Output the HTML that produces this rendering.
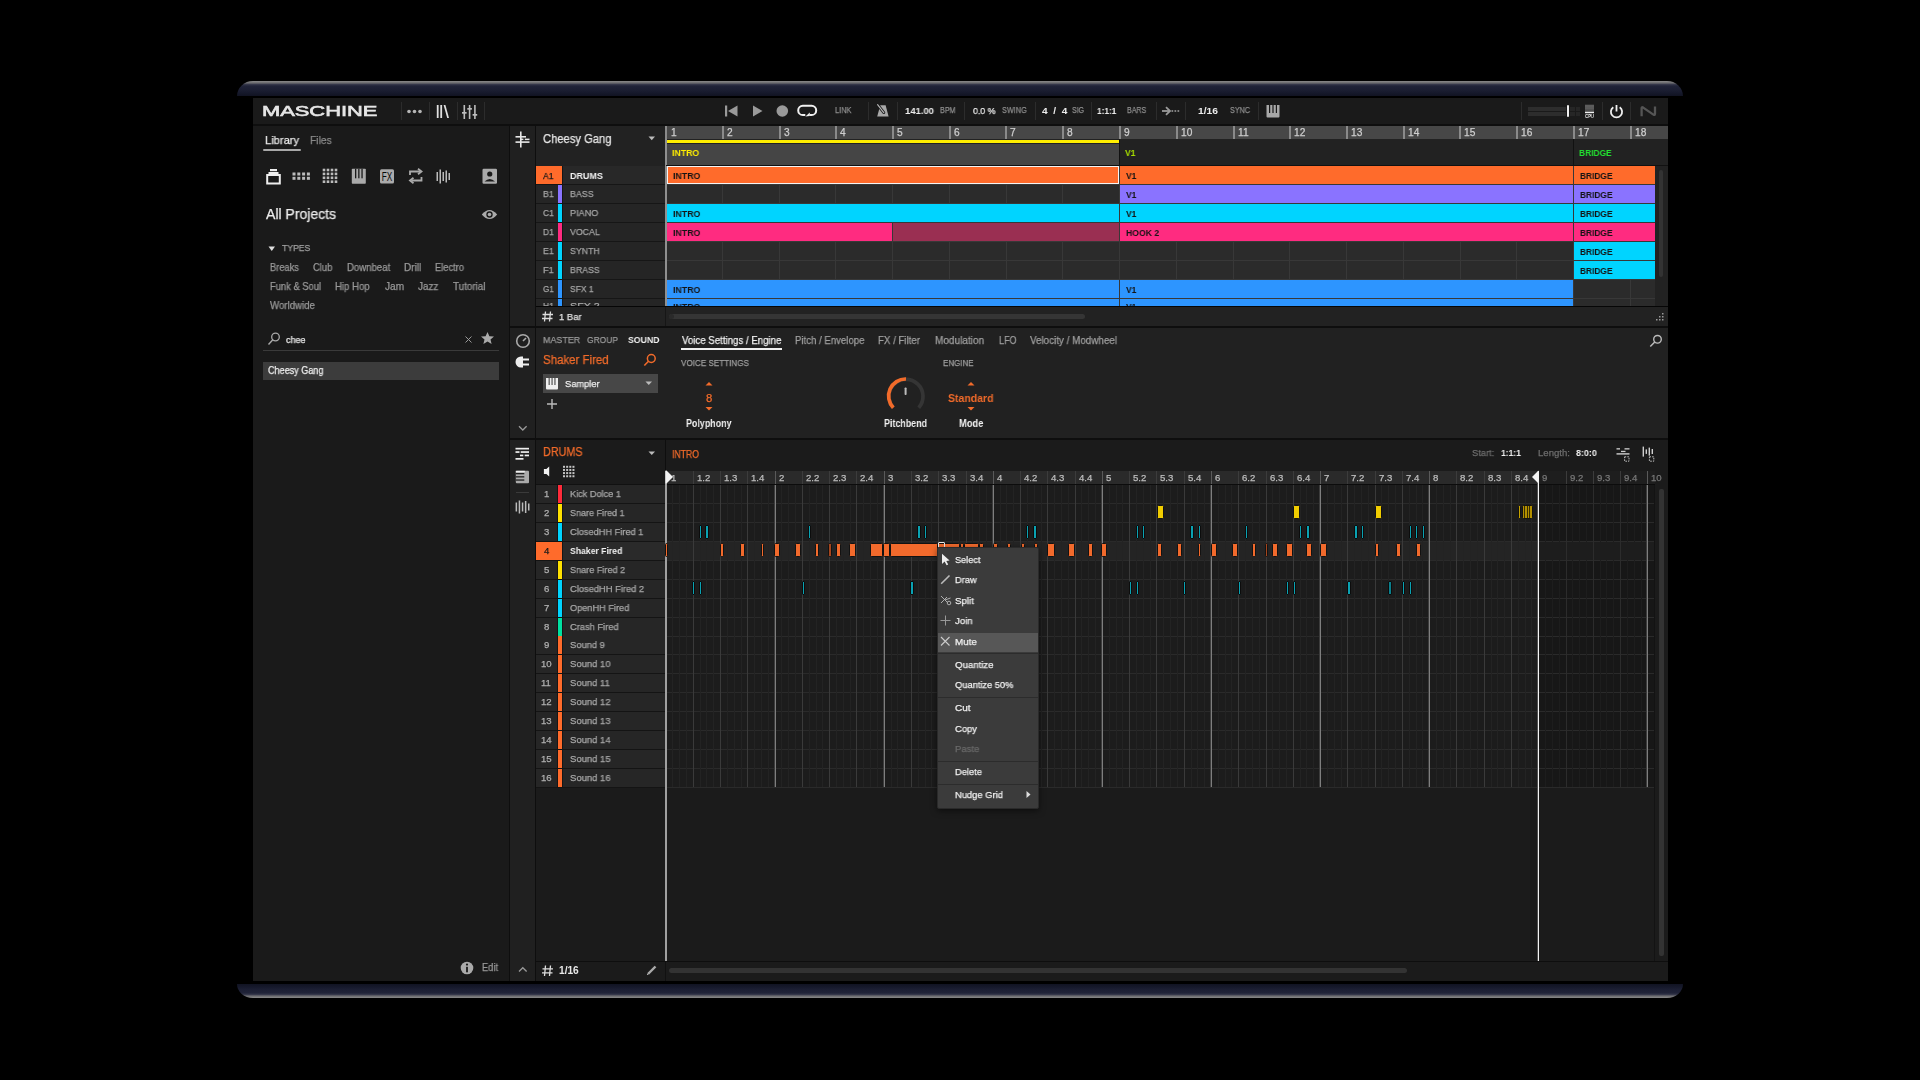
<!DOCTYPE html>
<html><head><meta charset="utf-8"><style>
html,body{margin:0;padding:0;width:1920px;height:1080px;overflow:hidden;background:#000;}
body{position:relative;font-family:"Liberation Sans",sans-serif;}
div,span,svg{position:absolute;}
span{white-space:pre;line-height:1;will-change:transform;}
.m{-webkit-text-stroke:0.25px currentColor;}
</style></head><body>
<div style="left:237px;top:81px;width:1446px;height:15px;background:linear-gradient(to bottom,#8a8a8a 0px,#6a6a6e 2px,#35374a 3.5px,#202338 5px,#1b1e32 9px,#16192b 12px,#111322 15px);border-radius:16px 16px 0 0/15px 15px 0 0;"></div>
<div style="left:237px;top:984px;width:1446px;height:14px;background:linear-gradient(to top,#8a8a8a 0px,#6a6a6e 2px,#35374a 3.5px,#202338 5px,#1b1e32 9px,#16192b 11px,#111322 14px);border-radius:0 0 16px 16px/0 0 14px 14px;"></div>
<div style="left:253px;top:98px;width:1415px;height:883px;background:#0e0e0e;"></div>
<div style="left:253px;top:98px;width:1415px;height:26px;background:#1a1a1a;"></div>
<div style="left:253px;top:126px;width:256px;height:855px;background:#1a1a1a;"></div>
<div style="left:510px;top:126px;width:25px;height:855px;background:#202020;"></div>
<div style="left:536px;top:126px;width:129px;height:200px;background:#222222;"></div>
<div style="left:666px;top:126px;width:1002px;height:200px;background:#222222;"></div>
<div style="left:536px;top:328px;width:1132px;height:110px;background:#212121;"></div>
<div style="left:536px;top:440px;width:129px;height:541px;background:#1b1b1b;"></div>
<div style="left:666px;top:440px;width:1002px;height:541px;background:#1b1b1b;"></div>
<span class="m" style="left:262.00px;top:104.34px;font-size:14.24px;color:#e6e6e6;transform:scaleX(1.5357);transform-origin:0 0;-webkit-text-stroke:0.6px #e6e6e6;">MASCHINE</span>
<div style="left:401px;top:102px;width:1px;height:18px;background:#2c2c2c;"></div>
<div style="left:429px;top:102px;width:1px;height:18px;background:#2c2c2c;"></div>
<div style="left:457px;top:102px;width:1px;height:18px;background:#2c2c2c;"></div>
<div style="left:484px;top:102px;width:1px;height:18px;background:#2c2c2c;"></div>
<div style="left:868px;top:102px;width:1px;height:18px;background:#2c2c2c;"></div>
<div style="left:897px;top:102px;width:1px;height:18px;background:#2c2c2c;"></div>
<div style="left:964px;top:102px;width:1px;height:18px;background:#2c2c2c;"></div>
<div style="left:1035px;top:102px;width:1px;height:18px;background:#2c2c2c;"></div>
<div style="left:1091px;top:102px;width:1px;height:18px;background:#2c2c2c;"></div>
<div style="left:1156px;top:102px;width:1px;height:18px;background:#2c2c2c;"></div>
<div style="left:1185px;top:102px;width:1px;height:18px;background:#2c2c2c;"></div>
<div style="left:1258px;top:102px;width:1px;height:18px;background:#2c2c2c;"></div>
<div style="left:1521px;top:102px;width:1px;height:18px;background:#2c2c2c;"></div>
<div style="left:1602px;top:102px;width:1px;height:18px;background:#2c2c2c;"></div>
<div style="left:1630px;top:102px;width:1px;height:18px;background:#2c2c2c;"></div>
<svg style="left:406px;top:107px;" width="18" height="9" viewBox="0 0 18 9"><circle cx="3.0" cy="4.5" r="1.8" fill="#b5b5b5"/><circle cx="8.5" cy="4.5" r="1.8" fill="#b5b5b5"/><circle cx="14.0" cy="4.5" r="1.8" fill="#b5b5b5"/></svg>
<svg style="left:436px;top:104px;" width="14" height="15" viewBox="0 0 14 15"><rect x="0.8" y="1" width="1.8" height="13" fill="#e0e0e0"/><rect x="4.3" y="1" width="1.8" height="13" fill="#e0e0e0"/><path d="M7.6 1 L9.4 1 L13 14 L11.2 14 Z" fill="#e0e0e0"/></svg>
<svg style="left:462px;top:104px;" width="16" height="16" viewBox="0 0 16 16"><g fill="#bdbdbd"><rect x="1.5" y="1" width="1.6" height="14"/><rect x="6.8" y="1" width="1.6" height="14"/><rect x="12.1" y="1" width="1.6" height="14"/><rect x="0" y="8" width="4.6" height="1.7"/><rect x="5.3" y="4" width="4.6" height="1.7"/><rect x="10.6" y="10" width="4.6" height="1.7"/></g></svg>
<svg style="left:724px;top:104px;" width="15" height="14" viewBox="0 0 15 14"><rect x="1" y="1.5" width="2.2" height="11" fill="#9a9a9a"/><path d="M13.5 1.5 L13.5 12.5 L4 7 Z" fill="#9a9a9a"/></svg>
<svg style="left:752px;top:104px;" width="12" height="14" viewBox="0 0 12 14"><path d="M1 1.5 L1 12.5 L10.5 7 Z" fill="#9a9a9a"/></svg>
<svg style="left:775px;top:104px;" width="15" height="14" viewBox="0 0 15 14"><circle cx="7.3" cy="7" r="5.8" fill="#9a9a9a"/></svg>
<svg style="left:797px;top:104px;" width="22" height="14" viewBox="0 0 22 14"><path d="M8.3 11 L5.8 11 A4.6 4.6 0 0 1 5.8 1.8 L14.6 1.8 A4.6 4.6 0 0 1 14.6 11 L12.6 11" fill="none" stroke="#f0f0f0" stroke-width="2"/><path d="M8.4 12.5 L12.8 8.6 L12.8 12.1 Z" fill="#f0f0f0"/></svg>
<span class="m" style="left:834.50px;top:106.29px;font-size:8.87px;color:#8e8e8e;transform:scaleX(0.8364);transform-origin:0 0;">LINK</span>
<svg style="left:876px;top:104px;" width="14" height="14" viewBox="0 0 14 14"><path d="M4.3 1.2 L9.6 1.2 L12.6 12.6 L1.2 12.6 Z" fill="#a8a8a8"/><path d="M1.6 0.6 L7.8 8.6" stroke="#1a1a1a" stroke-width="2.8" stroke-linecap="round"/><path d="M1.6 0.6 L7.8 8.6" stroke="#b8b8b8" stroke-width="1.1" stroke-linecap="round"/></svg>
<span style="left:905.00px;top:106.26px;font-size:9.74px;color:#ececec;font-weight:bold;transform:scaleX(0.9732);transform-origin:0 0;">141.00</span>
<span class="m" style="left:939.50px;top:106.29px;font-size:8.87px;color:#8e8e8e;transform:scaleX(0.8075);transform-origin:0 0;">BPM</span>
<span class="m" style="left:972.50px;top:106.26px;font-size:9.74px;color:#ececec;transform:scaleX(0.9043);transform-origin:0 0;">0.0 %</span>
<span class="m" style="left:1001.50px;top:106.29px;font-size:8.87px;color:#8e8e8e;transform:scaleX(0.8218);transform-origin:0 0;">SWING</span>
<span style="left:1042.00px;top:106.26px;font-size:9.74px;color:#ececec;font-weight:bold;transform:scaleX(1.0392);transform-origin:0 0;">4  /  4</span>
<span class="m" style="left:1072.00px;top:106.29px;font-size:8.87px;color:#8e8e8e;transform:scaleX(0.7911);transform-origin:0 0;">SIG</span>
<span style="left:1097.00px;top:106.26px;font-size:9.74px;color:#ececec;font-weight:bold;transform:scaleX(0.8488);transform-origin:0 0;">1:1:1</span>
<span class="m" style="left:1127.00px;top:106.29px;font-size:8.87px;color:#8e8e8e;transform:scaleX(0.7988);transform-origin:0 0;">BARS</span>
<svg style="left:1161px;top:105px;" width="20" height="12" viewBox="0 0 20 12"><path d="M1 6 L8 6" stroke="#9a9a9a" stroke-width="1.8"/><path d="M5 2.2 L9 6 L5 9.8" fill="none" stroke="#9a9a9a" stroke-width="1.8"/><rect x="10.5" y="5.2" width="1.7" height="1.6" fill="#9a9a9a"/><rect x="13.5" y="5.2" width="1.7" height="1.6" fill="#9a9a9a"/><rect x="16.5" y="5.2" width="1.7" height="1.6" fill="#9a9a9a"/></svg>
<span style="left:1198.00px;top:106.26px;font-size:9.74px;color:#ececec;font-weight:bold;transform:scaleX(1.0559);transform-origin:0 0;">1/16</span>
<span class="m" style="left:1230.00px;top:106.29px;font-size:8.87px;color:#8e8e8e;transform:scaleX(0.8114);transform-origin:0 0;">SYNC</span>
<svg style="left:1265px;top:104px;" width="16" height="15" viewBox="0 0 16 15"><path d="M1.5 1 L14.5 1 L14.5 12.5 Q14.5 13.5 13.5 13.5 L2.5 13.5 Q1.5 13.5 1.5 12.5 Z" fill="#a8a8a8"/><g fill="#1a1a1a"><rect x="4" y="1" width="1.2" height="8"/><rect x="7.4" y="1" width="1.2" height="8"/><rect x="10.8" y="1" width="1.2" height="8"/></g></svg>
<div style="left:1528px;top:107px;width:38px;height:4px;background:#2d2d2d;"></div>
<div style="left:1528px;top:112px;width:38px;height:4px;background:#2d2d2d;"></div>
<div style="left:1570px;top:107px;width:5px;height:4px;background:#262626;"></div>
<div style="left:1576px;top:107px;width:4px;height:4px;background:#262626;"></div>
<div style="left:1570px;top:112px;width:5px;height:4px;background:#262626;"></div>
<div style="left:1576px;top:112px;width:4px;height:4px;background:#262626;"></div>
<div style="left:1567px;top:105px;width:2px;height:12px;background:#f0f0f0;border-radius:1px;"></div>
<svg style="left:1584px;top:103px;" width="11" height="12" viewBox="0 0 11 12"><defs><linearGradient id="cpug" x1="0" y1="0" x2="0" y2="1"><stop offset="0" stop-color="#5a5a5a"/><stop offset="1" stop-color="#4a4a4a"/></linearGradient></defs><rect x="1" y="1.7" width="9" height="7.5" fill="url(#cpug)"/><rect x="1" y="2.7" width="9" height="0.7" fill="#666"/><rect x="1" y="4.7" width="9" height="0.7" fill="#666"/><rect x="1" y="8.8" width="9" height="1.4" fill="#f0f0f0"/></svg>
<span style="left:1585.20px;top:114.38px;font-size:5.81px;color:#f0f0f0;font-weight:bold;transform:scaleX(0.7173);transform-origin:0 0;">CPU</span>
<svg style="left:1608px;top:103px;" width="17" height="17" viewBox="0 0 17 17"><path d="M5.3 4.2 A5.6 5.6 0 1 0 11.7 4.2" fill="none" stroke="#f0f0f0" stroke-width="1.8"/><path d="M8.5 2 L8.5 8.5" stroke="#f0f0f0" stroke-width="1.8"/></svg>
<svg style="left:1639px;top:104px;" width="20" height="14" viewBox="0 0 20 14"><path d="M2.6 12.2 L2.6 4.2 Q2.6 2.6 4.2 3.6 L14.4 10.6 Q16 11.6 16 9.8 L16 2.4" fill="none" stroke="#555" stroke-width="2.3" stroke-linejoin="round"/></svg>
<span class="m" style="left:264.50px;top:134.36px;font-size:11.63px;color:#e8e8e8;transform:scaleX(0.9571);transform-origin:0 0;">Library</span>
<div style="left:263px;top:149px;width:38px;height:2px;background:#a8a8a8;border-radius:1px;"></div>
<span class="m" style="left:309.50px;top:134.36px;font-size:11.63px;color:#8a8a8a;transform:scaleX(0.8845);transform-origin:0 0;">Files</span>
<svg style="left:266px;top:168px;" width="15" height="17" viewBox="0 0 15 17"><rect x="4" y="1" width="7" height="2.2" fill="#eee"/><rect x="2.5" y="4" width="10" height="2" fill="#eee"/><rect x="1.2" y="7" width="12.6" height="8.5" fill="none" stroke="#eee" stroke-width="2"/></svg>
<svg style="left:292px;top:172px;" width="20" height="9" viewBox="0 0 20 9"><rect x="0.5" y="0.5" width="3" height="3" fill="#bbb"/><rect x="0.5" y="4.8" width="3" height="3" fill="#bbb"/><rect x="5.3" y="0.5" width="3" height="3" fill="#bbb"/><rect x="5.3" y="4.8" width="3" height="3" fill="#bbb"/><rect x="10.1" y="0.5" width="3" height="3" fill="#bbb"/><rect x="10.1" y="4.8" width="3" height="3" fill="#bbb"/><rect x="14.899999999999999" y="0.5" width="3" height="3" fill="#bbb"/><rect x="14.899999999999999" y="4.8" width="3" height="3" fill="#bbb"/></svg>
<svg style="left:322px;top:168px;" width="17" height="16" viewBox="0 0 17 16"><rect x="0.7" y="0.7" width="2.6" height="2.6" fill="#bbb"/><rect x="0.7" y="4.6" width="2.6" height="2.6" fill="#bbb"/><rect x="0.7" y="8.5" width="2.6" height="2.6" fill="#bbb"/><rect x="0.7" y="12.399999999999999" width="2.6" height="2.6" fill="#bbb"/><rect x="4.7" y="0.7" width="2.6" height="2.6" fill="#bbb"/><rect x="4.7" y="4.6" width="2.6" height="2.6" fill="#bbb"/><rect x="4.7" y="8.5" width="2.6" height="2.6" fill="#bbb"/><rect x="4.7" y="12.399999999999999" width="2.6" height="2.6" fill="#bbb"/><rect x="8.7" y="0.7" width="2.6" height="2.6" fill="#bbb"/><rect x="8.7" y="4.6" width="2.6" height="2.6" fill="#bbb"/><rect x="8.7" y="8.5" width="2.6" height="2.6" fill="#bbb"/><rect x="8.7" y="12.399999999999999" width="2.6" height="2.6" fill="#bbb"/><rect x="12.7" y="0.7" width="2.6" height="2.6" fill="#bbb"/><rect x="12.7" y="4.6" width="2.6" height="2.6" fill="#bbb"/><rect x="12.7" y="8.5" width="2.6" height="2.6" fill="#bbb"/><rect x="12.7" y="12.399999999999999" width="2.6" height="2.6" fill="#bbb"/></svg>
<svg style="left:351px;top:168px;" width="16" height="17" viewBox="0 0 16 17"><path d="M0.8 1.5 Q0.8 0.8 1.5 0.8 L14 0.8 Q14.8 0.8 14.8 1.5 L14.8 15 Q14.8 15.8 14 15.8 L1.5 15.8 Q0.8 15.8 0.8 15 Z" fill="#aaa"/><g fill="#1a1a1a"><rect x="4" y="0.8" width="1.3" height="9.5"/><rect x="7.2" y="0.8" width="1.3" height="9.5"/><rect x="10.4" y="0.8" width="1.3" height="9.5"/></g></svg>
<svg style="left:379px;top:168px;" width="17" height="17" viewBox="0 0 17 17"><rect x="1" y="1.2" width="14" height="14.2" rx="1.5" fill="#ababab"/><text x="8" y="13.2" font-size="12" font-family="Liberation Sans" text-anchor="middle" fill="#0a0a0a" textLength="10.5" lengthAdjust="spacingAndGlyphs">FX</text></svg>
<svg style="left:408px;top:168px;" width="16" height="17" viewBox="0 0 16 17"><path d="M2 7 L2 3.5 L12 3.5" fill="none" stroke="#aaa" stroke-width="1.8"/><path d="M10 0.8 L13.5 3.5 L10 6.2" fill="none" stroke="#aaa" stroke-width="1.8"/><path d="M13.5 9 L13.5 12.5 L3.5 12.5" fill="none" stroke="#aaa" stroke-width="1.8"/><path d="M5.5 9.8 L2 12.5 L5.5 15.2" fill="none" stroke="#aaa" stroke-width="1.8"/></svg>
<svg style="left:436px;top:169px;" width="16" height="15" viewBox="0 0 16 15"><g fill="#bbb"><rect x="0.5" y="3" width="1.5" height="9"/><rect x="3.5" y="0.5" width="1.5" height="14"/><rect x="6.5" y="3" width="1.5" height="9"/><rect x="9.5" y="1.5" width="1.5" height="12"/><rect x="12.5" y="4" width="1.5" height="7"/></g></svg>
<svg style="left:482px;top:168px;" width="16" height="17" viewBox="0 0 16 17"><rect x="0.5" y="0.8" width="14.5" height="15" rx="1.2" fill="#aaa"/><circle cx="7.75" cy="6" r="2.6" fill="#1a1a1a"/><path d="M2.5 13.5 Q7.75 8.5 13 13.5 Z" fill="#1a1a1a"/></svg>
<span class="m" style="left:265.90px;top:207.17px;font-size:14.10px;color:#ececec;transform:scaleX(0.9930);transform-origin:0 0;">All Projects</span>
<svg style="left:481px;top:208px;" width="18" height="13" viewBox="0 0 18 13"><path d="M0.8 6.5 Q8.5 -2.5 16.2 6.5 Q8.5 15.5 0.8 6.5 Z" fill="#aaa"/><circle cx="8.5" cy="6.5" r="3.2" fill="#1a1a1a"/><circle cx="8.5" cy="6.5" r="1.8" fill="#aaa"/></svg>
<svg style="left:268px;top:246px;" width="8" height="6" viewBox="0 0 8 6"><path d="M0.5 0.5 L7 0.5 L3.75 5 Z" fill="#ddd"/></svg>
<span class="m" style="left:281.70px;top:244.13px;font-size:9.30px;color:#a0a0a0;transform:scaleX(0.9275);transform-origin:0 0;">TYPES</span>
<span class="m" style="left:270.00px;top:263.39px;font-size:10.17px;color:#999999;transform:scaleX(0.9133);transform-origin:0 0;">Breaks</span>
<span class="m" style="left:312.80px;top:263.39px;font-size:10.17px;color:#999999;transform:scaleX(0.9279);transform-origin:0 0;">Club</span>
<span class="m" style="left:347.00px;top:263.39px;font-size:10.17px;color:#999999;transform:scaleX(0.9447);transform-origin:0 0;">Downbeat</span>
<span class="m" style="left:403.80px;top:263.39px;font-size:10.17px;color:#999999;transform:scaleX(0.9829);transform-origin:0 0;">Drill</span>
<span class="m" style="left:435.00px;top:263.39px;font-size:10.17px;color:#999999;transform:scaleX(0.9165);transform-origin:0 0;">Electro</span>
<span class="m" style="left:270.00px;top:281.99px;font-size:10.17px;color:#999999;transform:scaleX(0.9224);transform-origin:0 0;">Funk &amp; Soul</span>
<span class="m" style="left:335.20px;top:281.99px;font-size:10.17px;color:#999999;transform:scaleX(0.9462);transform-origin:0 0;">Hip Hop</span>
<span class="m" style="left:384.70px;top:281.99px;font-size:10.17px;color:#999999;transform:scaleX(0.9933);transform-origin:0 0;">Jam</span>
<span class="m" style="left:417.80px;top:281.99px;font-size:10.17px;color:#999999;transform:scaleX(0.9757);transform-origin:0 0;">Jazz</span>
<span class="m" style="left:452.90px;top:281.99px;font-size:10.17px;color:#999999;transform:scaleX(0.9709);transform-origin:0 0;">Tutorial</span>
<span class="m" style="left:270.00px;top:300.79px;font-size:10.17px;color:#999999;transform:scaleX(0.9512);transform-origin:0 0;">Worldwide</span>
<svg style="left:267px;top:332px;" width="14" height="14" viewBox="0 0 14 14"><circle cx="8.5" cy="5" r="3.8" fill="none" stroke="#aaa" stroke-width="1.3"/><path d="M5.8 7.8 L1.5 12.5" stroke="#aaa" stroke-width="1.4"/></svg>
<span class="m" style="left:285.50px;top:335.20px;font-size:9.45px;color:#e8e8e8;transform:scaleX(0.9512);transform-origin:0 0;">chee</span>
<svg style="left:464px;top:335px;" width="9" height="9" viewBox="0 0 9 9"><path d="M1.5 1.5 L7.5 7.5 M7.5 1.5 L1.5 7.5" stroke="#999" stroke-width="1"/></svg>
<svg style="left:480px;top:331px;" width="15" height="14" viewBox="0 0 15 14"><path d="M7.5 1 L9.4 5.3 L14 5.6 L10.5 8.6 L11.6 13 L7.5 10.6 L3.4 13 L4.5 8.6 L1 5.6 L5.6 5.3 Z" fill="#aaa"/></svg>
<div style="left:263px;top:350px;width:236px;height:1px;background:#3a3a3a;"></div>
<div style="left:263px;top:362px;width:236px;height:18px;background:#3c3c3c;"></div>
<span class="m" style="left:268.20px;top:365.69px;font-size:10.17px;color:#eeeeee;transform:scaleX(0.8920);transform-origin:0 0;">Cheesy Gang</span>
<svg style="left:460px;top:961px;" width="14" height="14" viewBox="0 0 14 14"><circle cx="7" cy="7" r="6.3" fill="#aaa"/><rect x="6.1" y="5.8" width="1.8" height="5.5" fill="#1a1a1a"/><circle cx="7" cy="3.6" r="1.1" fill="#1a1a1a"/></svg>
<span class="m" style="left:482.30px;top:962.89px;font-size:10.17px;color:#999999;transform:scaleX(0.9116);transform-origin:0 0;">Edit</span>
<svg style="left:515px;top:131px;" width="15" height="17" viewBox="0 0 15 17"><g fill="#e8e8e8"><rect x="5" y="0.5" width="1.6" height="16"/><rect x="0.5" y="5" width="10.5" height="1.6"/><rect x="0.5" y="10.3" width="14" height="1.6"/><rect x="6" y="7.6" width="2.4" height="1.5"/><rect x="9.8" y="7.6" width="4.7" height="1.5"/></g></svg>
<span class="m" style="left:542.80px;top:132.73px;font-size:12.72px;color:#e6e6e6;transform:scaleX(0.8808);transform-origin:0 0;">Cheesy Gang</span>
<svg style="left:648px;top:136px;" width="8" height="5" viewBox="0 0 8 5"><path d="M0.5 0.5 L7 0.5 L3.75 4.2 Z" fill="#bbb"/></svg>
<div style="left:666px;top:126px;width:1002px;height:13px;background:#474747;"></div>
<div style="left:665px;top:126px;width:2px;height:13px;background:#8a8a8a;"></div>
<span class="m" style="left:671.00px;top:128.19px;font-size:10.17px;color:#cfcfcf;">1</span>
<div style="left:722px;top:126px;width:2px;height:13px;background:#8a8a8a;"></div>
<span class="m" style="left:726.80px;top:128.19px;font-size:10.17px;color:#cfcfcf;">2</span>
<div style="left:779px;top:126px;width:2px;height:13px;background:#8a8a8a;"></div>
<span class="m" style="left:783.80px;top:128.19px;font-size:10.17px;color:#cfcfcf;">3</span>
<div style="left:835px;top:126px;width:2px;height:13px;background:#8a8a8a;"></div>
<span class="m" style="left:839.80px;top:128.19px;font-size:10.17px;color:#cfcfcf;">4</span>
<div style="left:892px;top:126px;width:2px;height:13px;background:#8a8a8a;"></div>
<span class="m" style="left:896.80px;top:128.19px;font-size:10.17px;color:#cfcfcf;">5</span>
<div style="left:949px;top:126px;width:2px;height:13px;background:#8a8a8a;"></div>
<span class="m" style="left:953.80px;top:128.19px;font-size:10.17px;color:#cfcfcf;">6</span>
<div style="left:1005px;top:126px;width:2px;height:13px;background:#8a8a8a;"></div>
<span class="m" style="left:1009.80px;top:128.19px;font-size:10.17px;color:#cfcfcf;">7</span>
<div style="left:1062px;top:126px;width:2px;height:13px;background:#8a8a8a;"></div>
<span class="m" style="left:1066.80px;top:128.19px;font-size:10.17px;color:#cfcfcf;">8</span>
<div style="left:1119px;top:126px;width:2px;height:13px;background:#8a8a8a;"></div>
<span class="m" style="left:1123.80px;top:128.19px;font-size:10.17px;color:#cfcfcf;">9</span>
<div style="left:1176px;top:126px;width:2px;height:13px;background:#8a8a8a;"></div>
<span class="m" style="left:1180.80px;top:128.19px;font-size:10.17px;color:#cfcfcf;">10</span>
<div style="left:1233px;top:126px;width:2px;height:13px;background:#8a8a8a;"></div>
<span class="m" style="left:1237.80px;top:128.19px;font-size:10.17px;color:#cfcfcf;">11</span>
<div style="left:1289px;top:126px;width:2px;height:13px;background:#8a8a8a;"></div>
<span class="m" style="left:1293.80px;top:128.19px;font-size:10.17px;color:#cfcfcf;">12</span>
<div style="left:1346px;top:126px;width:2px;height:13px;background:#8a8a8a;"></div>
<span class="m" style="left:1350.80px;top:128.19px;font-size:10.17px;color:#cfcfcf;">13</span>
<div style="left:1403px;top:126px;width:2px;height:13px;background:#8a8a8a;"></div>
<span class="m" style="left:1407.80px;top:128.19px;font-size:10.17px;color:#cfcfcf;">14</span>
<div style="left:1459px;top:126px;width:2px;height:13px;background:#8a8a8a;"></div>
<span class="m" style="left:1463.80px;top:128.19px;font-size:10.17px;color:#cfcfcf;">15</span>
<div style="left:1516px;top:126px;width:2px;height:13px;background:#8a8a8a;"></div>
<span class="m" style="left:1520.80px;top:128.19px;font-size:10.17px;color:#cfcfcf;">16</span>
<div style="left:1573px;top:126px;width:2px;height:13px;background:#8a8a8a;"></div>
<span class="m" style="left:1577.80px;top:128.19px;font-size:10.17px;color:#cfcfcf;">17</span>
<div style="left:1630px;top:126px;width:2px;height:13px;background:#8a8a8a;"></div>
<span class="m" style="left:1634.80px;top:128.19px;font-size:10.17px;color:#cfcfcf;">18</span>
<div style="left:665px;top:139px;width:2px;height:167px;background:#8f8f8f;"></div>
<div style="left:667px;top:139px;width:1001px;height:27px;background:#222222;"></div>
<div style="left:667px;top:140px;width:453px;height:3px;background:#ffee00;"></div>
<div style="left:667px;top:144px;width:453px;height:21px;background:#454545;"></div>
<div style="left:1119px;top:139px;width:1px;height:27px;background:#111;"></div>
<div style="left:1573px;top:139px;width:1px;height:27px;background:#111;"></div>
<span style="left:671.50px;top:147.63px;font-size:9.88px;color:#ffee00;font-weight:bold;transform:scaleX(0.8849);transform-origin:0 0;">INTRO</span>
<span style="left:1124.70px;top:147.63px;font-size:9.88px;color:#a8e000;font-weight:bold;transform:scaleX(0.8672);transform-origin:0 0;">V1</span>
<span style="left:1579.00px;top:147.63px;font-size:9.88px;color:#22e030;font-weight:bold;transform:scaleX(0.8505);transform-origin:0 0;">BRIDGE</span>
<div style="left:666px;top:165px;width:1002px;height:1px;background:#111;"></div>
<div style="left:536px;top:166px;width:129px;height:18px;background:#282828;"></div>
<div style="left:536px;top:184px;width:129px;height:1px;background:#161616;"></div>
<div style="left:536px;top:166px;width:26px;height:18px;background:#ff6b2b;"></div>
<span class="m" style="left:542.80px;top:170.58px;font-size:9.59px;color:#1a1a1a;transform:scaleX(0.8935);transform-origin:0 0;">A1</span>
<span style="left:569.75px;top:170.58px;font-size:9.59px;color:#f2f2f2;font-weight:bold;transform:scaleX(0.9358);transform-origin:0 0;">DRUMS</span>
<div style="left:562px;top:166px;width:1px;height:18px;background:#151515;"></div>
<div style="left:667px;top:166px;width:988px;height:18px;background:#2b2b2b;"></div>
<div style="left:667px;top:184px;width:988px;height:1px;background:#383838;"></div>
<div style="left:722px;top:166px;width:1px;height:18px;background:#383838;"></div>
<div style="left:779px;top:166px;width:1px;height:18px;background:#383838;"></div>
<div style="left:835px;top:166px;width:1px;height:18px;background:#383838;"></div>
<div style="left:892px;top:166px;width:1px;height:18px;background:#383838;"></div>
<div style="left:949px;top:166px;width:1px;height:18px;background:#383838;"></div>
<div style="left:1006px;top:166px;width:1px;height:18px;background:#383838;"></div>
<div style="left:1062px;top:166px;width:1px;height:18px;background:#383838;"></div>
<div style="left:1119px;top:166px;width:1px;height:18px;background:#383838;"></div>
<div style="left:1176px;top:166px;width:1px;height:18px;background:#383838;"></div>
<div style="left:1233px;top:166px;width:1px;height:18px;background:#383838;"></div>
<div style="left:1289px;top:166px;width:1px;height:18px;background:#383838;"></div>
<div style="left:1346px;top:166px;width:1px;height:18px;background:#383838;"></div>
<div style="left:1403px;top:166px;width:1px;height:18px;background:#383838;"></div>
<div style="left:1460px;top:166px;width:1px;height:18px;background:#383838;"></div>
<div style="left:1516px;top:166px;width:1px;height:18px;background:#383838;"></div>
<div style="left:1573px;top:166px;width:1px;height:18px;background:#383838;"></div>
<div style="left:1630px;top:166px;width:1px;height:18px;background:#383838;"></div>
<div style="left:536px;top:185px;width:129px;height:18px;background:#252525;"></div>
<div style="left:536px;top:203px;width:129px;height:1px;background:#161616;"></div>
<div style="left:558px;top:185px;width:4px;height:18px;background:#8a73ff;"></div>
<span class="m" style="left:542.60px;top:188.88px;font-size:9.59px;color:#a5a5a5;transform:scaleX(0.9190);transform-origin:0 0;">B1</span>
<span class="m" style="left:569.75px;top:188.88px;font-size:9.59px;color:#a5a5a5;transform:scaleX(0.9253);transform-origin:0 0;">BASS</span>
<div style="left:562px;top:185px;width:1px;height:18px;background:#151515;"></div>
<div style="left:667px;top:185px;width:988px;height:18px;background:#2b2b2b;"></div>
<div style="left:667px;top:203px;width:988px;height:1px;background:#383838;"></div>
<div style="left:722px;top:185px;width:1px;height:18px;background:#383838;"></div>
<div style="left:779px;top:185px;width:1px;height:18px;background:#383838;"></div>
<div style="left:835px;top:185px;width:1px;height:18px;background:#383838;"></div>
<div style="left:892px;top:185px;width:1px;height:18px;background:#383838;"></div>
<div style="left:949px;top:185px;width:1px;height:18px;background:#383838;"></div>
<div style="left:1006px;top:185px;width:1px;height:18px;background:#383838;"></div>
<div style="left:1062px;top:185px;width:1px;height:18px;background:#383838;"></div>
<div style="left:1119px;top:185px;width:1px;height:18px;background:#383838;"></div>
<div style="left:1176px;top:185px;width:1px;height:18px;background:#383838;"></div>
<div style="left:1233px;top:185px;width:1px;height:18px;background:#383838;"></div>
<div style="left:1289px;top:185px;width:1px;height:18px;background:#383838;"></div>
<div style="left:1346px;top:185px;width:1px;height:18px;background:#383838;"></div>
<div style="left:1403px;top:185px;width:1px;height:18px;background:#383838;"></div>
<div style="left:1460px;top:185px;width:1px;height:18px;background:#383838;"></div>
<div style="left:1516px;top:185px;width:1px;height:18px;background:#383838;"></div>
<div style="left:1573px;top:185px;width:1px;height:18px;background:#383838;"></div>
<div style="left:1630px;top:185px;width:1px;height:18px;background:#383838;"></div>
<div style="left:536px;top:204px;width:129px;height:18px;background:#252525;"></div>
<div style="left:536px;top:222px;width:129px;height:1px;background:#161616;"></div>
<div style="left:558px;top:204px;width:4px;height:18px;background:#00d4ff;"></div>
<span class="m" style="left:542.60px;top:207.88px;font-size:9.59px;color:#a5a5a5;transform:scaleX(0.8795);transform-origin:0 0;">C1</span>
<span class="m" style="left:569.75px;top:207.88px;font-size:9.59px;color:#a5a5a5;transform:scaleX(0.9519);transform-origin:0 0;">PIANO</span>
<div style="left:562px;top:204px;width:1px;height:18px;background:#151515;"></div>
<div style="left:667px;top:204px;width:988px;height:18px;background:#2b2b2b;"></div>
<div style="left:667px;top:222px;width:988px;height:1px;background:#383838;"></div>
<div style="left:722px;top:204px;width:1px;height:18px;background:#383838;"></div>
<div style="left:779px;top:204px;width:1px;height:18px;background:#383838;"></div>
<div style="left:835px;top:204px;width:1px;height:18px;background:#383838;"></div>
<div style="left:892px;top:204px;width:1px;height:18px;background:#383838;"></div>
<div style="left:949px;top:204px;width:1px;height:18px;background:#383838;"></div>
<div style="left:1006px;top:204px;width:1px;height:18px;background:#383838;"></div>
<div style="left:1062px;top:204px;width:1px;height:18px;background:#383838;"></div>
<div style="left:1119px;top:204px;width:1px;height:18px;background:#383838;"></div>
<div style="left:1176px;top:204px;width:1px;height:18px;background:#383838;"></div>
<div style="left:1233px;top:204px;width:1px;height:18px;background:#383838;"></div>
<div style="left:1289px;top:204px;width:1px;height:18px;background:#383838;"></div>
<div style="left:1346px;top:204px;width:1px;height:18px;background:#383838;"></div>
<div style="left:1403px;top:204px;width:1px;height:18px;background:#383838;"></div>
<div style="left:1460px;top:204px;width:1px;height:18px;background:#383838;"></div>
<div style="left:1516px;top:204px;width:1px;height:18px;background:#383838;"></div>
<div style="left:1573px;top:204px;width:1px;height:18px;background:#383838;"></div>
<div style="left:1630px;top:204px;width:1px;height:18px;background:#383838;"></div>
<div style="left:536px;top:223px;width:129px;height:18px;background:#252525;"></div>
<div style="left:536px;top:241px;width:129px;height:1px;background:#161616;"></div>
<div style="left:558px;top:223px;width:4px;height:18px;background:#ff2b80;"></div>
<span class="m" style="left:542.60px;top:226.88px;font-size:9.59px;color:#a5a5a5;transform:scaleX(0.8795);transform-origin:0 0;">D1</span>
<span class="m" style="left:569.75px;top:226.88px;font-size:9.59px;color:#a5a5a5;transform:scaleX(0.9163);transform-origin:0 0;">VOCAL</span>
<div style="left:562px;top:223px;width:1px;height:18px;background:#151515;"></div>
<div style="left:667px;top:223px;width:988px;height:18px;background:#2b2b2b;"></div>
<div style="left:667px;top:241px;width:988px;height:1px;background:#383838;"></div>
<div style="left:722px;top:223px;width:1px;height:18px;background:#383838;"></div>
<div style="left:779px;top:223px;width:1px;height:18px;background:#383838;"></div>
<div style="left:835px;top:223px;width:1px;height:18px;background:#383838;"></div>
<div style="left:892px;top:223px;width:1px;height:18px;background:#383838;"></div>
<div style="left:949px;top:223px;width:1px;height:18px;background:#383838;"></div>
<div style="left:1006px;top:223px;width:1px;height:18px;background:#383838;"></div>
<div style="left:1062px;top:223px;width:1px;height:18px;background:#383838;"></div>
<div style="left:1119px;top:223px;width:1px;height:18px;background:#383838;"></div>
<div style="left:1176px;top:223px;width:1px;height:18px;background:#383838;"></div>
<div style="left:1233px;top:223px;width:1px;height:18px;background:#383838;"></div>
<div style="left:1289px;top:223px;width:1px;height:18px;background:#383838;"></div>
<div style="left:1346px;top:223px;width:1px;height:18px;background:#383838;"></div>
<div style="left:1403px;top:223px;width:1px;height:18px;background:#383838;"></div>
<div style="left:1460px;top:223px;width:1px;height:18px;background:#383838;"></div>
<div style="left:1516px;top:223px;width:1px;height:18px;background:#383838;"></div>
<div style="left:1573px;top:223px;width:1px;height:18px;background:#383838;"></div>
<div style="left:1630px;top:223px;width:1px;height:18px;background:#383838;"></div>
<div style="left:536px;top:242px;width:129px;height:18px;background:#252525;"></div>
<div style="left:536px;top:260px;width:129px;height:1px;background:#161616;"></div>
<div style="left:558px;top:242px;width:4px;height:18px;background:#00d4ff;"></div>
<span class="m" style="left:542.60px;top:245.88px;font-size:9.59px;color:#a5a5a5;transform:scaleX(0.9190);transform-origin:0 0;">E1</span>
<span class="m" style="left:569.75px;top:245.88px;font-size:9.59px;color:#a5a5a5;transform:scaleX(0.9163);transform-origin:0 0;">SYNTH</span>
<div style="left:562px;top:242px;width:1px;height:18px;background:#151515;"></div>
<div style="left:667px;top:242px;width:988px;height:18px;background:#2b2b2b;"></div>
<div style="left:667px;top:260px;width:988px;height:1px;background:#383838;"></div>
<div style="left:722px;top:242px;width:1px;height:18px;background:#383838;"></div>
<div style="left:779px;top:242px;width:1px;height:18px;background:#383838;"></div>
<div style="left:835px;top:242px;width:1px;height:18px;background:#383838;"></div>
<div style="left:892px;top:242px;width:1px;height:18px;background:#383838;"></div>
<div style="left:949px;top:242px;width:1px;height:18px;background:#383838;"></div>
<div style="left:1006px;top:242px;width:1px;height:18px;background:#383838;"></div>
<div style="left:1062px;top:242px;width:1px;height:18px;background:#383838;"></div>
<div style="left:1119px;top:242px;width:1px;height:18px;background:#383838;"></div>
<div style="left:1176px;top:242px;width:1px;height:18px;background:#383838;"></div>
<div style="left:1233px;top:242px;width:1px;height:18px;background:#383838;"></div>
<div style="left:1289px;top:242px;width:1px;height:18px;background:#383838;"></div>
<div style="left:1346px;top:242px;width:1px;height:18px;background:#383838;"></div>
<div style="left:1403px;top:242px;width:1px;height:18px;background:#383838;"></div>
<div style="left:1460px;top:242px;width:1px;height:18px;background:#383838;"></div>
<div style="left:1516px;top:242px;width:1px;height:18px;background:#383838;"></div>
<div style="left:1573px;top:242px;width:1px;height:18px;background:#383838;"></div>
<div style="left:1630px;top:242px;width:1px;height:18px;background:#383838;"></div>
<div style="left:536px;top:261px;width:129px;height:18px;background:#252525;"></div>
<div style="left:536px;top:279px;width:129px;height:1px;background:#161616;"></div>
<div style="left:558px;top:261px;width:4px;height:18px;background:#00d4ff;"></div>
<span class="m" style="left:542.60px;top:264.88px;font-size:9.59px;color:#a5a5a5;transform:scaleX(0.9664);transform-origin:0 0;">F1</span>
<span class="m" style="left:569.75px;top:264.88px;font-size:9.59px;color:#a5a5a5;transform:scaleX(0.9163);transform-origin:0 0;">BRASS</span>
<div style="left:562px;top:261px;width:1px;height:18px;background:#151515;"></div>
<div style="left:667px;top:261px;width:988px;height:18px;background:#2b2b2b;"></div>
<div style="left:667px;top:279px;width:988px;height:1px;background:#383838;"></div>
<div style="left:722px;top:261px;width:1px;height:18px;background:#383838;"></div>
<div style="left:779px;top:261px;width:1px;height:18px;background:#383838;"></div>
<div style="left:835px;top:261px;width:1px;height:18px;background:#383838;"></div>
<div style="left:892px;top:261px;width:1px;height:18px;background:#383838;"></div>
<div style="left:949px;top:261px;width:1px;height:18px;background:#383838;"></div>
<div style="left:1006px;top:261px;width:1px;height:18px;background:#383838;"></div>
<div style="left:1062px;top:261px;width:1px;height:18px;background:#383838;"></div>
<div style="left:1119px;top:261px;width:1px;height:18px;background:#383838;"></div>
<div style="left:1176px;top:261px;width:1px;height:18px;background:#383838;"></div>
<div style="left:1233px;top:261px;width:1px;height:18px;background:#383838;"></div>
<div style="left:1289px;top:261px;width:1px;height:18px;background:#383838;"></div>
<div style="left:1346px;top:261px;width:1px;height:18px;background:#383838;"></div>
<div style="left:1403px;top:261px;width:1px;height:18px;background:#383838;"></div>
<div style="left:1460px;top:261px;width:1px;height:18px;background:#383838;"></div>
<div style="left:1516px;top:261px;width:1px;height:18px;background:#383838;"></div>
<div style="left:1573px;top:261px;width:1px;height:18px;background:#383838;"></div>
<div style="left:1630px;top:261px;width:1px;height:18px;background:#383838;"></div>
<div style="left:536px;top:280px;width:129px;height:18px;background:#252525;"></div>
<div style="left:536px;top:298px;width:129px;height:1px;background:#161616;"></div>
<div style="left:558px;top:280px;width:4px;height:18px;background:#2d95ff;"></div>
<span class="m" style="left:542.60px;top:283.88px;font-size:9.59px;color:#a5a5a5;transform:scaleX(0.8433);transform-origin:0 0;">G1</span>
<span class="m" style="left:569.75px;top:283.88px;font-size:9.59px;color:#a5a5a5;transform:scaleX(0.8887);transform-origin:0 0;">SFX 1</span>
<div style="left:562px;top:280px;width:1px;height:18px;background:#151515;"></div>
<div style="left:667px;top:280px;width:988px;height:18px;background:#2b2b2b;"></div>
<div style="left:667px;top:298px;width:988px;height:1px;background:#383838;"></div>
<div style="left:722px;top:280px;width:1px;height:18px;background:#383838;"></div>
<div style="left:779px;top:280px;width:1px;height:18px;background:#383838;"></div>
<div style="left:835px;top:280px;width:1px;height:18px;background:#383838;"></div>
<div style="left:892px;top:280px;width:1px;height:18px;background:#383838;"></div>
<div style="left:949px;top:280px;width:1px;height:18px;background:#383838;"></div>
<div style="left:1006px;top:280px;width:1px;height:18px;background:#383838;"></div>
<div style="left:1062px;top:280px;width:1px;height:18px;background:#383838;"></div>
<div style="left:1119px;top:280px;width:1px;height:18px;background:#383838;"></div>
<div style="left:1176px;top:280px;width:1px;height:18px;background:#383838;"></div>
<div style="left:1233px;top:280px;width:1px;height:18px;background:#383838;"></div>
<div style="left:1289px;top:280px;width:1px;height:18px;background:#383838;"></div>
<div style="left:1346px;top:280px;width:1px;height:18px;background:#383838;"></div>
<div style="left:1403px;top:280px;width:1px;height:18px;background:#383838;"></div>
<div style="left:1460px;top:280px;width:1px;height:18px;background:#383838;"></div>
<div style="left:1516px;top:280px;width:1px;height:18px;background:#383838;"></div>
<div style="left:1573px;top:280px;width:1px;height:18px;background:#383838;"></div>
<div style="left:1630px;top:280px;width:1px;height:18px;background:#383838;"></div>
<div style="left:536px;top:299px;width:129px;height:18px;background:#252525;"></div>
<div style="left:536px;top:317px;width:129px;height:1px;background:#161616;"></div>
<div style="left:558px;top:299px;width:4px;height:18px;background:#2d95ff;"></div>
<span class="m" style="left:542.60px;top:300.88px;font-size:9.59px;color:#a5a5a5;transform:scaleX(0.8795);transform-origin:0 0;">H1</span>
<span class="m" style="left:569.75px;top:300.88px;font-size:9.59px;color:#a5a5a5;transform:scaleX(1.1174);transform-origin:0 0;">SFX 2</span>
<div style="left:562px;top:299px;width:1px;height:18px;background:#151515;"></div>
<div style="left:667px;top:299px;width:988px;height:18px;background:#2b2b2b;"></div>
<div style="left:667px;top:317px;width:988px;height:1px;background:#383838;"></div>
<div style="left:722px;top:299px;width:1px;height:18px;background:#383838;"></div>
<div style="left:779px;top:299px;width:1px;height:18px;background:#383838;"></div>
<div style="left:835px;top:299px;width:1px;height:18px;background:#383838;"></div>
<div style="left:892px;top:299px;width:1px;height:18px;background:#383838;"></div>
<div style="left:949px;top:299px;width:1px;height:18px;background:#383838;"></div>
<div style="left:1006px;top:299px;width:1px;height:18px;background:#383838;"></div>
<div style="left:1062px;top:299px;width:1px;height:18px;background:#383838;"></div>
<div style="left:1119px;top:299px;width:1px;height:18px;background:#383838;"></div>
<div style="left:1176px;top:299px;width:1px;height:18px;background:#383838;"></div>
<div style="left:1233px;top:299px;width:1px;height:18px;background:#383838;"></div>
<div style="left:1289px;top:299px;width:1px;height:18px;background:#383838;"></div>
<div style="left:1346px;top:299px;width:1px;height:18px;background:#383838;"></div>
<div style="left:1403px;top:299px;width:1px;height:18px;background:#383838;"></div>
<div style="left:1460px;top:299px;width:1px;height:18px;background:#383838;"></div>
<div style="left:1516px;top:299px;width:1px;height:18px;background:#383838;"></div>
<div style="left:1573px;top:299px;width:1px;height:18px;background:#383838;"></div>
<div style="left:1630px;top:299px;width:1px;height:18px;background:#383838;"></div>
<div style="left:536px;top:306px;width:1132px;height:4px;background:#222222;"></div>
<div style="left:536px;top:306px;width:1132px;height:1px;background:#050505;"></div>
<div style="left:667px;top:166px;width:452px;height:18px;background:#ff6b2b;"></div>
<span style="left:672.50px;top:171.40px;font-size:9.45px;color:#141414;font-weight:bold;transform:scaleX(0.9325);transform-origin:0 0;">INTRO</span>
<div style="left:1120px;top:166px;width:453px;height:18px;background:#ff6b2b;"></div>
<span style="left:1125.50px;top:171.40px;font-size:9.45px;color:#141414;font-weight:bold;transform:scaleX(0.8986);transform-origin:0 0;">V1</span>
<div style="left:1574px;top:166px;width:81px;height:18px;background:#ff6b2b;"></div>
<span style="left:1579.50px;top:171.40px;font-size:9.45px;color:#141414;font-weight:bold;transform:scaleX(0.8843);transform-origin:0 0;">BRIDGE</span>
<div style="left:1120px;top:185px;width:453px;height:18px;background:#8a73ff;"></div>
<span style="left:1125.50px;top:190.40px;font-size:9.45px;color:#141414;font-weight:bold;transform:scaleX(0.8986);transform-origin:0 0;">V1</span>
<div style="left:1574px;top:185px;width:81px;height:18px;background:#8a73ff;"></div>
<span style="left:1579.50px;top:190.40px;font-size:9.45px;color:#141414;font-weight:bold;transform:scaleX(0.8843);transform-origin:0 0;">BRIDGE</span>
<div style="left:667px;top:204px;width:452px;height:18px;background:#00d4ff;"></div>
<span style="left:672.50px;top:209.40px;font-size:9.45px;color:#141414;font-weight:bold;transform:scaleX(0.9325);transform-origin:0 0;">INTRO</span>
<div style="left:1120px;top:204px;width:453px;height:18px;background:#00d4ff;"></div>
<span style="left:1125.50px;top:209.40px;font-size:9.45px;color:#141414;font-weight:bold;transform:scaleX(0.8986);transform-origin:0 0;">V1</span>
<div style="left:1574px;top:204px;width:81px;height:18px;background:#00d4ff;"></div>
<span style="left:1579.50px;top:209.40px;font-size:9.45px;color:#141414;font-weight:bold;transform:scaleX(0.8843);transform-origin:0 0;">BRIDGE</span>
<div style="left:667px;top:223px;width:225px;height:18px;background:#ff2b80;"></div>
<span style="left:672.50px;top:228.40px;font-size:9.45px;color:#141414;font-weight:bold;transform:scaleX(0.9325);transform-origin:0 0;">INTRO</span>
<div style="left:893px;top:223px;width:226px;height:18px;background:#9a2f52;"></div>
<div style="left:1120px;top:223px;width:453px;height:18px;background:#ff2b80;"></div>
<span style="left:1125.50px;top:228.40px;font-size:9.45px;color:#141414;font-weight:bold;transform:scaleX(0.9163);transform-origin:0 0;">HOOK 2</span>
<div style="left:1574px;top:223px;width:81px;height:18px;background:#ff2b80;"></div>
<span style="left:1579.50px;top:228.40px;font-size:9.45px;color:#141414;font-weight:bold;transform:scaleX(0.8843);transform-origin:0 0;">BRIDGE</span>
<div style="left:1574px;top:242px;width:81px;height:18px;background:#00d4ff;"></div>
<span style="left:1579.50px;top:247.40px;font-size:9.45px;color:#141414;font-weight:bold;transform:scaleX(0.8843);transform-origin:0 0;">BRIDGE</span>
<div style="left:1574px;top:261px;width:81px;height:18px;background:#00d4ff;"></div>
<span style="left:1579.50px;top:266.40px;font-size:9.45px;color:#141414;font-weight:bold;transform:scaleX(0.8843);transform-origin:0 0;">BRIDGE</span>
<div style="left:667px;top:280px;width:452px;height:18px;background:#2d95ff;"></div>
<span style="left:672.50px;top:285.40px;font-size:9.45px;color:#141414;font-weight:bold;transform:scaleX(0.9325);transform-origin:0 0;">INTRO</span>
<div style="left:1120px;top:280px;width:453px;height:18px;background:#2d95ff;"></div>
<span style="left:1125.50px;top:285.40px;font-size:9.45px;color:#141414;font-weight:bold;transform:scaleX(0.8986);transform-origin:0 0;">V1</span>
<div style="left:667px;top:299px;width:452px;height:18px;background:#2d95ff;"></div>
<span style="left:672.50px;top:302.30px;font-size:9.45px;color:#141414;font-weight:bold;transform:scaleX(0.9325);transform-origin:0 0;">INTRO</span>
<div style="left:1120px;top:299px;width:453px;height:18px;background:#2d95ff;"></div>
<span style="left:1125.50px;top:302.30px;font-size:9.45px;color:#141414;font-weight:bold;transform:scaleX(0.8986);transform-origin:0 0;">V1</span>
<div style="left:667px;top:166px;width:452px;height:18px;background:transparent;box-sizing:border-box;border:1.5px solid #f4f4f4;"></div>
<div style="left:536px;top:306px;width:1132px;height:21px;background:#222222;"></div>
<div style="left:536px;top:306px;width:1132px;height:1px;background:#060606;"></div>
<div style="left:665px;top:307px;width:1px;height:19px;background:#161616;"></div>
<div style="left:1655px;top:166px;width:13px;height:140px;background:#222222;"></div>
<div style="left:1659px;top:170px;width:4px;height:107px;background:#333333;border-radius:2px;"></div>
<svg style="left:542px;top:311px;" width="12" height="11" viewBox="0 0 12 11"><g stroke="#ddd" stroke-width="1.3"><path d="M3.5 0.5 L2.5 10.5 M8.5 0.5 L7.5 10.5 M0.5 3.5 L11 3.5 M0 7.5 L10.5 7.5"/></g></svg>
<span class="m" style="left:558.50px;top:312.38px;font-size:9.59px;color:#e0e0e0;transform:scaleX(0.9814);transform-origin:0 0;">1 Bar</span>
<div style="left:669px;top:314px;width:416px;height:5px;background:#353535;border-radius:2.5px;"></div>
<div style="left:669px;top:314px;width:5px;height:5px;background:#2a2a2a;border-radius:2.5px;"></div>
<svg style="left:1654px;top:312px;" width="10" height="10" viewBox="0 0 10 10"><rect x="8" y="1" width="1.5" height="1.5" fill="#999"/><rect x="5" y="4" width="1.5" height="1.5" fill="#999"/><rect x="8" y="4" width="1.5" height="1.5" fill="#999"/><rect x="2" y="7" width="1.5" height="1.5" fill="#999"/><rect x="5" y="7" width="1.5" height="1.5" fill="#999"/><rect x="8" y="7" width="1.5" height="1.5" fill="#999"/></svg>
<div style="left:536px;top:326px;width:1132px;height:2px;background:#0e0e0e;"></div>
<div style="left:510px;top:326px;width:25px;height:2px;background:#0e0e0e;"></div>
<svg style="left:515px;top:333px;" width="16" height="16" viewBox="0 0 16 16"><circle cx="8" cy="8" r="6.3" fill="none" stroke="#aaa" stroke-width="1.6"/><path d="M8 8 L11 5" stroke="#aaa" stroke-width="1.6"/></svg>
<svg style="left:515px;top:355px;" width="16" height="14" viewBox="0 0 16 14"><path d="M8 1.5 L8 12.5 L6 12.5 A5.5 5.5 0 0 1 6 1.5 Z" fill="#eee"/><rect x="8" y="3.5" width="6" height="2" fill="#eee"/><rect x="8" y="8.5" width="6" height="2" fill="#eee"/></svg>
<svg style="left:518px;top:425px;" width="10" height="7" viewBox="0 0 10 7"><path d="M1 1.2 L4.8 5 L8.6 1.2" fill="none" stroke="#999" stroke-width="1.3"/></svg>
<span class="m" style="left:542.60px;top:335.43px;font-size:9.88px;color:#9a9a9a;transform:scaleX(0.9037);transform-origin:0 0;">MASTER</span>
<span class="m" style="left:587.40px;top:335.43px;font-size:9.88px;color:#9a9a9a;transform:scaleX(0.8530);transform-origin:0 0;">GROUP</span>
<span style="left:627.70px;top:335.43px;font-size:9.88px;color:#f0f0f0;font-weight:bold;transform:scaleX(0.8828);transform-origin:0 0;">SOUND</span>
<span class="m" style="left:542.60px;top:353.56px;font-size:12.21px;color:#f26b2a;transform:scaleX(0.9399);transform-origin:0 0;">Shaker Fired</span>
<svg style="left:643px;top:353px;" width="14" height="14" viewBox="0 0 14 14"><circle cx="8.3" cy="5.5" r="3.9" fill="none" stroke="#f26b2a" stroke-width="1.5"/><path d="M5.5 8.3 L1.3 12.5" stroke="#f26b2a" stroke-width="1.6"/></svg>
<div style="left:543px;top:374px;width:115px;height:19px;background:#474747;"></div>
<svg style="left:545px;top:377px;" width="14" height="14" viewBox="0 0 14 14"><path d="M1 1 L13 1 L13 11.5 Q13 12.5 12 12.5 L2 12.5 Q1 12.5 1 11.5 Z" fill="#f0f0f0"/><g fill="#474747"><rect x="3.6" y="1" width="1.1" height="7"/><rect x="6.5" y="1" width="1.1" height="7"/><rect x="9.4" y="1" width="1.1" height="7"/></g></svg>
<span class="m" style="left:564.50px;top:378.98px;font-size:9.59px;color:#eeeeee;transform:scaleX(0.9683);transform-origin:0 0;">Sampler</span>
<svg style="left:645px;top:381px;" width="8" height="5" viewBox="0 0 8 5"><path d="M0.5 0.5 L7 0.5 L3.75 4 Z" fill="#bbb"/></svg>
<svg style="left:546px;top:398px;" width="12" height="12" viewBox="0 0 12 12"><path d="M6 1 L6 11 M1 6 L11 6" stroke="#bbb" stroke-width="1.4"/></svg>
<span class="m" style="left:681.80px;top:335.15px;font-size:11.05px;color:#f0f0f0;transform:scaleX(0.8749);transform-origin:0 0;">Voice Settings / Engine</span>
<div style="left:681px;top:348px;width:101px;height:2px;background:#f0f0f0;"></div>
<span class="m" style="left:794.90px;top:335.15px;font-size:11.05px;color:#a0a0a0;transform:scaleX(0.8696);transform-origin:0 0;">Pitch / Envelope</span>
<span class="m" style="left:878.20px;top:335.15px;font-size:11.05px;color:#a0a0a0;transform:scaleX(0.8771);transform-origin:0 0;">FX / Filter</span>
<span class="m" style="left:934.50px;top:335.15px;font-size:11.05px;color:#a0a0a0;transform:scaleX(0.9090);transform-origin:0 0;">Modulation</span>
<span class="m" style="left:998.50px;top:335.15px;font-size:11.05px;color:#a0a0a0;transform:scaleX(0.8145);transform-origin:0 0;">LFO</span>
<span class="m" style="left:1029.60px;top:335.15px;font-size:11.05px;color:#a0a0a0;transform:scaleX(0.8909);transform-origin:0 0;">Velocity / Modwheel</span>
<span class="m" style="left:681.30px;top:358.08px;font-size:9.59px;color:#a0a0a0;transform:scaleX(0.8449);transform-origin:0 0;">VOICE SETTINGS</span>
<span class="m" style="left:943.40px;top:358.08px;font-size:9.59px;color:#a0a0a0;transform:scaleX(0.8318);transform-origin:0 0;">ENGINE</span>
<svg style="left:704px;top:381px;" width="10" height="6" viewBox="0 0 10 6"><path d="M1.5 4.5 L5 1 L8.5 4.5 Z" fill="#f26b2a"/></svg>
<span class="m" style="left:705.80px;top:392.60px;font-size:11.34px;color:#f26b2a;">8</span>
<svg style="left:704px;top:406px;" width="10" height="6" viewBox="0 0 10 6"><path d="M1.5 1 L5 4.5 L8.5 1 Z" fill="#f26b2a"/></svg>
<span style="left:686.00px;top:417.60px;font-size:11.34px;color:#f0f0f0;font-weight:bold;transform:scaleX(0.7871);transform-origin:0 0;">Polyphony</span>
<svg style="left:886px;top:376px;" width="40" height="40" viewBox="0 0 40 40"><path d="M7.3 31.7 A17 17 0 1 1 32.7 31.7" fill="none" stroke="#353535" stroke-width="3.7"/><path d="M7.3 31.7 A17 17 0 0 1 20 3" fill="none" stroke="#f26b2a" stroke-width="3.7"/><rect x="18.6" y="11.5" width="2" height="7.5" rx="0.8" fill="#bbb"/></svg>
<span style="left:884.20px;top:417.60px;font-size:11.34px;color:#f0f0f0;font-weight:bold;transform:scaleX(0.7863);transform-origin:0 0;">Pitchbend</span>
<svg style="left:966px;top:381px;" width="10" height="6" viewBox="0 0 10 6"><path d="M1.5 4.5 L5 1 L8.5 4.5 Z" fill="#f26b2a"/></svg>
<span style="left:947.70px;top:392.60px;font-size:11.34px;color:#f26b2a;font-weight:bold;transform:scaleX(0.9258);transform-origin:0 0;">Standard</span>
<svg style="left:966px;top:406px;" width="10" height="6" viewBox="0 0 10 6"><path d="M1.5 1 L5 4.5 L8.5 1 Z" fill="#f26b2a"/></svg>
<span style="left:959.20px;top:417.60px;font-size:11.34px;color:#f0f0f0;font-weight:bold;transform:scaleX(0.8246);transform-origin:0 0;">Mode</span>
<svg style="left:1649px;top:334px;" width="14" height="14" viewBox="0 0 14 14"><circle cx="8.5" cy="5.3" r="3.8" fill="none" stroke="#bbb" stroke-width="1.4"/><path d="M5.8 8.0 L1.3 12.5" stroke="#bbb" stroke-width="1.5"/></svg>
<div style="left:536px;top:438px;width:1132px;height:2px;background:#0e0e0e;"></div>
<div style="left:510px;top:438px;width:25px;height:2px;background:#0e0e0e;"></div>
<svg style="left:515px;top:447px;" width="15" height="14" viewBox="0 0 15 14"><g fill="#eee"><rect x="0.5" y="0.8" width="13.5" height="1.7"/><rect x="0.5" y="4.2" width="4" height="1.7"/><rect x="5.7" y="4.2" width="8.3" height="1.7"/><rect x="5" y="7.6" width="3.3" height="1.7"/><rect x="9.7" y="7.6" width="4.3" height="1.7"/><rect x="0.5" y="11" width="8" height="1.7"/></g></svg>
<svg style="left:515px;top:470px;" width="15" height="14" viewBox="0 0 15 14"><rect x="0.8" y="0.8" width="13.2" height="12.4" rx="1" fill="#aaa"/><g fill="#202020"><rect x="0.8" y="3" width="8.5" height="1.3"/><rect x="0.8" y="6.2" width="8.5" height="1.3"/><rect x="0.8" y="9.4" width="8.5" height="1.3"/></g><g fill="#eee"><rect x="0.8" y="0.8" width="9" height="1.5"/></g></svg>
<div style="left:516px;top:492px;width:13px;height:1px;background:#3a3a3a;"></div>
<svg style="left:515px;top:500px;" width="16" height="14" viewBox="0 0 16 14"><g fill="#bbb"><rect x="0.6" y="2.5" width="1.5" height="9"/><rect x="3.7" y="0.5" width="1.5" height="13"/><rect x="6.8" y="2.5" width="1.5" height="9"/><rect x="9.9" y="1" width="1.5" height="12"/><rect x="13" y="3.5" width="1.5" height="7"/></g></svg>
<svg style="left:518px;top:966px;" width="10" height="7" viewBox="0 0 10 7"><path d="M1 5.5 L4.8 1.7 L8.6 5.5" fill="none" stroke="#999" stroke-width="1.3"/></svg>
<span class="m" style="left:542.80px;top:446.24px;font-size:12.35px;color:#f26b2a;transform:scaleX(0.8746);transform-origin:0 0;">DRUMS</span>
<svg style="left:648px;top:451px;" width="8" height="5" viewBox="0 0 8 5"><path d="M0.5 0.5 L7 0.5 L3.75 4 Z" fill="#bbb"/></svg>
<svg style="left:543px;top:466px;" width="9" height="11" viewBox="0 0 9 11"><path d="M0.9 3 L3.4 3 L6.2 0.6 L6.2 10.4 L3.4 8 L0.9 8 Z" fill="#f0f0f0"/></svg>
<svg style="left:562px;top:465px;" width="13" height="13" viewBox="0 0 13 13"><rect x="1.00" y="0.80" width="2" height="2" fill="#c4c4c4"/><rect x="1.00" y="3.95" width="2" height="2" fill="#c4c4c4"/><rect x="1.00" y="7.10" width="2" height="2" fill="#c4c4c4"/><rect x="1.00" y="10.25" width="2" height="2" fill="#c4c4c4"/><rect x="4.15" y="0.80" width="2" height="2" fill="#c4c4c4"/><rect x="4.15" y="3.95" width="2" height="2" fill="#c4c4c4"/><rect x="4.15" y="7.10" width="2" height="2" fill="#c4c4c4"/><rect x="4.15" y="10.25" width="2" height="2" fill="#c4c4c4"/><rect x="7.30" y="0.80" width="2" height="2" fill="#c4c4c4"/><rect x="7.30" y="3.95" width="2" height="2" fill="#c4c4c4"/><rect x="7.30" y="7.10" width="2" height="2" fill="#c4c4c4"/><rect x="7.30" y="10.25" width="2" height="2" fill="#c4c4c4"/><rect x="10.45" y="0.80" width="2" height="2" fill="#c4c4c4"/><rect x="10.45" y="3.95" width="2" height="2" fill="#c4c4c4"/><rect x="10.45" y="7.10" width="2" height="2" fill="#c4c4c4"/><rect x="10.45" y="10.25" width="2" height="2" fill="#c4c4c4"/></svg>
<div style="left:536px;top:484px;width:129px;height:1px;background:#111;"></div>
<div style="left:536px;top:485px;width:129px;height:18px;background:#262626;"></div>
<div style="left:536px;top:503px;width:129px;height:1px;background:#141414;"></div>
<div style="left:558px;top:485px;width:4px;height:18px;background:#ff2b3a;"></div>
<span class="m" style="left:543.50px;top:488.88px;font-size:9.59px;color:#b0b0b0;">1</span>
<span class="m" style="left:569.80px;top:488.88px;font-size:9.59px;color:#a8a8a8;transform:scaleX(0.9543);transform-origin:0 0;">Kick Dolce 1</span>
<div style="left:557px;top:485px;width:1px;height:18px;background:#161616;"></div>
<div style="left:562px;top:485px;width:1px;height:18px;background:#161616;"></div>
<div style="left:536px;top:504px;width:129px;height:18px;background:#262626;"></div>
<div style="left:536px;top:522px;width:129px;height:1px;background:#141414;"></div>
<div style="left:558px;top:504px;width:4px;height:18px;background:#ffe100;"></div>
<span class="m" style="left:543.50px;top:507.88px;font-size:9.59px;color:#b0b0b0;">2</span>
<span class="m" style="left:569.80px;top:507.88px;font-size:9.59px;color:#a8a8a8;transform:scaleX(0.9392);transform-origin:0 0;">Snare Fired 1</span>
<div style="left:557px;top:504px;width:1px;height:18px;background:#161616;"></div>
<div style="left:562px;top:504px;width:1px;height:18px;background:#161616;"></div>
<div style="left:536px;top:523px;width:129px;height:18px;background:#262626;"></div>
<div style="left:536px;top:541px;width:129px;height:1px;background:#141414;"></div>
<div style="left:558px;top:523px;width:4px;height:18px;background:#00d4ff;"></div>
<span class="m" style="left:543.50px;top:526.88px;font-size:9.59px;color:#b0b0b0;">3</span>
<span class="m" style="left:569.80px;top:526.88px;font-size:9.59px;color:#a8a8a8;transform:scaleX(0.9638);transform-origin:0 0;">ClosedHH Fired 1</span>
<div style="left:557px;top:523px;width:1px;height:18px;background:#161616;"></div>
<div style="left:562px;top:523px;width:1px;height:18px;background:#161616;"></div>
<div style="left:536px;top:542px;width:129px;height:18px;background:#2a2a2a;"></div>
<div style="left:536px;top:560px;width:129px;height:1px;background:#141414;"></div>
<div style="left:536px;top:542px;width:26px;height:18px;background:#ff6b2b;"></div>
<span class="m" style="left:543.50px;top:545.88px;font-size:9.59px;color:#1a1a1a;">4</span>
<span style="left:569.80px;top:545.88px;font-size:9.59px;color:#f4f4f4;font-weight:bold;transform:scaleX(0.9014);transform-origin:0 0;">Shaker Fired</span>
<div style="left:562px;top:542px;width:1px;height:18px;background:#161616;"></div>
<div style="left:536px;top:561px;width:129px;height:18px;background:#262626;"></div>
<div style="left:536px;top:579px;width:129px;height:1px;background:#141414;"></div>
<div style="left:558px;top:561px;width:4px;height:18px;background:#ffe100;"></div>
<span class="m" style="left:543.50px;top:564.88px;font-size:9.59px;color:#b0b0b0;">5</span>
<span class="m" style="left:569.80px;top:564.88px;font-size:9.59px;color:#a8a8a8;transform:scaleX(0.9495);transform-origin:0 0;">Snare Fired 2</span>
<div style="left:557px;top:561px;width:1px;height:18px;background:#161616;"></div>
<div style="left:562px;top:561px;width:1px;height:18px;background:#161616;"></div>
<div style="left:536px;top:580px;width:129px;height:18px;background:#262626;"></div>
<div style="left:536px;top:598px;width:129px;height:1px;background:#141414;"></div>
<div style="left:558px;top:580px;width:4px;height:18px;background:#00d4ff;"></div>
<span class="m" style="left:543.50px;top:583.88px;font-size:9.59px;color:#b0b0b0;">6</span>
<span class="m" style="left:569.80px;top:583.88px;font-size:9.59px;color:#a8a8a8;transform:scaleX(0.9742);transform-origin:0 0;">ClosedHH Fired 2</span>
<div style="left:557px;top:580px;width:1px;height:18px;background:#161616;"></div>
<div style="left:562px;top:580px;width:1px;height:18px;background:#161616;"></div>
<div style="left:536px;top:599px;width:129px;height:18px;background:#262626;"></div>
<div style="left:536px;top:617px;width:129px;height:1px;background:#141414;"></div>
<div style="left:558px;top:599px;width:4px;height:18px;background:#00d4ff;"></div>
<span class="m" style="left:543.50px;top:602.88px;font-size:9.59px;color:#b0b0b0;">7</span>
<span class="m" style="left:569.80px;top:602.88px;font-size:9.59px;color:#a8a8a8;transform:scaleX(0.9591);transform-origin:0 0;">OpenHH Fired</span>
<div style="left:557px;top:599px;width:1px;height:18px;background:#161616;"></div>
<div style="left:562px;top:599px;width:1px;height:18px;background:#161616;"></div>
<div style="left:536px;top:618px;width:129px;height:18px;background:#262626;"></div>
<div style="left:536px;top:636px;width:129px;height:1px;background:#141414;"></div>
<div style="left:558px;top:618px;width:4px;height:18px;background:#00e0a0;"></div>
<span class="m" style="left:543.50px;top:621.88px;font-size:9.59px;color:#b0b0b0;">8</span>
<span class="m" style="left:569.80px;top:621.88px;font-size:9.59px;color:#a8a8a8;transform:scaleX(0.9696);transform-origin:0 0;">Crash Fired</span>
<div style="left:557px;top:618px;width:1px;height:18px;background:#161616;"></div>
<div style="left:562px;top:618px;width:1px;height:18px;background:#161616;"></div>
<div style="left:536px;top:636px;width:129px;height:18px;background:#262626;"></div>
<div style="left:536px;top:654px;width:129px;height:1px;background:#141414;"></div>
<div style="left:558px;top:636px;width:4px;height:18px;background:#ff6b2b;"></div>
<span class="m" style="left:543.50px;top:639.88px;font-size:9.59px;color:#b0b0b0;">9</span>
<span class="m" style="left:569.80px;top:639.88px;font-size:9.59px;color:#a8a8a8;transform:scaleX(0.9795);transform-origin:0 0;">Sound 9</span>
<div style="left:557px;top:636px;width:1px;height:18px;background:#161616;"></div>
<div style="left:562px;top:636px;width:1px;height:18px;background:#161616;"></div>
<div style="left:536px;top:655px;width:129px;height:18px;background:#262626;"></div>
<div style="left:536px;top:673px;width:129px;height:1px;background:#141414;"></div>
<div style="left:558px;top:655px;width:4px;height:18px;background:#ff6b2b;"></div>
<span class="m" style="left:541.00px;top:658.88px;font-size:9.59px;color:#b0b0b0;">10</span>
<span class="m" style="left:569.80px;top:658.88px;font-size:9.59px;color:#a8a8a8;transform:scaleX(0.9888);transform-origin:0 0;">Sound 10</span>
<div style="left:557px;top:655px;width:1px;height:18px;background:#161616;"></div>
<div style="left:562px;top:655px;width:1px;height:18px;background:#161616;"></div>
<div style="left:536px;top:674px;width:129px;height:18px;background:#262626;"></div>
<div style="left:536px;top:692px;width:129px;height:1px;background:#141414;"></div>
<div style="left:558px;top:674px;width:4px;height:18px;background:#ff6b2b;"></div>
<span class="m" style="left:541.00px;top:677.88px;font-size:9.59px;color:#b0b0b0;">11</span>
<span class="m" style="left:569.80px;top:677.88px;font-size:9.59px;color:#a8a8a8;transform:scaleX(0.9880);transform-origin:0 0;">Sound 11</span>
<div style="left:557px;top:674px;width:1px;height:18px;background:#161616;"></div>
<div style="left:562px;top:674px;width:1px;height:18px;background:#161616;"></div>
<div style="left:536px;top:693px;width:129px;height:18px;background:#262626;"></div>
<div style="left:536px;top:711px;width:129px;height:1px;background:#141414;"></div>
<div style="left:558px;top:693px;width:4px;height:18px;background:#ff6b2b;"></div>
<span class="m" style="left:541.00px;top:696.88px;font-size:9.59px;color:#b0b0b0;">12</span>
<span class="m" style="left:569.80px;top:696.88px;font-size:9.59px;color:#a8a8a8;transform:scaleX(0.9888);transform-origin:0 0;">Sound 12</span>
<div style="left:557px;top:693px;width:1px;height:18px;background:#161616;"></div>
<div style="left:562px;top:693px;width:1px;height:18px;background:#161616;"></div>
<div style="left:536px;top:712px;width:129px;height:18px;background:#262626;"></div>
<div style="left:536px;top:730px;width:129px;height:1px;background:#141414;"></div>
<div style="left:558px;top:712px;width:4px;height:18px;background:#ff6b2b;"></div>
<span class="m" style="left:541.00px;top:715.88px;font-size:9.59px;color:#b0b0b0;">13</span>
<span class="m" style="left:569.80px;top:715.88px;font-size:9.59px;color:#a8a8a8;transform:scaleX(0.9888);transform-origin:0 0;">Sound 13</span>
<div style="left:557px;top:712px;width:1px;height:18px;background:#161616;"></div>
<div style="left:562px;top:712px;width:1px;height:18px;background:#161616;"></div>
<div style="left:536px;top:731px;width:129px;height:18px;background:#262626;"></div>
<div style="left:536px;top:749px;width:129px;height:1px;background:#141414;"></div>
<div style="left:558px;top:731px;width:4px;height:18px;background:#ff6b2b;"></div>
<span class="m" style="left:541.00px;top:734.88px;font-size:9.59px;color:#b0b0b0;">14</span>
<span class="m" style="left:569.80px;top:734.88px;font-size:9.59px;color:#a8a8a8;transform:scaleX(0.9888);transform-origin:0 0;">Sound 14</span>
<div style="left:557px;top:731px;width:1px;height:18px;background:#161616;"></div>
<div style="left:562px;top:731px;width:1px;height:18px;background:#161616;"></div>
<div style="left:536px;top:750px;width:129px;height:18px;background:#262626;"></div>
<div style="left:536px;top:768px;width:129px;height:1px;background:#141414;"></div>
<div style="left:558px;top:750px;width:4px;height:18px;background:#ff6b2b;"></div>
<span class="m" style="left:541.00px;top:753.88px;font-size:9.59px;color:#b0b0b0;">15</span>
<span class="m" style="left:569.80px;top:753.88px;font-size:9.59px;color:#a8a8a8;transform:scaleX(0.9888);transform-origin:0 0;">Sound 15</span>
<div style="left:557px;top:750px;width:1px;height:18px;background:#161616;"></div>
<div style="left:562px;top:750px;width:1px;height:18px;background:#161616;"></div>
<div style="left:536px;top:769px;width:129px;height:18px;background:#262626;"></div>
<div style="left:536px;top:787px;width:129px;height:1px;background:#141414;"></div>
<div style="left:558px;top:769px;width:4px;height:18px;background:#ff6b2b;"></div>
<span class="m" style="left:541.00px;top:772.88px;font-size:9.59px;color:#b0b0b0;">16</span>
<span class="m" style="left:569.80px;top:772.88px;font-size:9.59px;color:#a8a8a8;transform:scaleX(0.9888);transform-origin:0 0;">Sound 16</span>
<div style="left:557px;top:769px;width:1px;height:18px;background:#161616;"></div>
<div style="left:562px;top:769px;width:1px;height:18px;background:#161616;"></div>
<div style="left:667px;top:471px;width:988px;height:13px;background:#2a2a2a;"></div>
<div style="left:1539px;top:471px;width:116px;height:13px;background:#1e1e1e;"></div>
<div style="left:666px;top:484px;width:989px;height:1px;background:#0c0c0c;"></div>
<div style="left:667px;top:485px;width:988px;height:302px;background:#1c1c1c;"></div>
<div style="left:1539px;top:485px;width:116px;height:302px;background:#171717;"></div>
<div style="left:667px;top:542px;width:988px;height:18px;background:#242424;"></div>
<div style="left:1539px;top:542px;width:116px;height:18px;background:#1d1d1d;"></div>
<div style="left:667px;top:503px;width:988px;height:1px;background:#2a2a2a;"></div>
<div style="left:667px;top:522px;width:988px;height:1px;background:#2a2a2a;"></div>
<div style="left:667px;top:541px;width:988px;height:1px;background:#2a2a2a;"></div>
<div style="left:667px;top:560px;width:988px;height:1px;background:#2a2a2a;"></div>
<div style="left:667px;top:579px;width:988px;height:1px;background:#2a2a2a;"></div>
<div style="left:667px;top:598px;width:988px;height:1px;background:#2a2a2a;"></div>
<div style="left:667px;top:617px;width:988px;height:1px;background:#2a2a2a;"></div>
<div style="left:667px;top:636px;width:988px;height:1px;background:#2a2a2a;"></div>
<div style="left:667px;top:654px;width:988px;height:1px;background:#2a2a2a;"></div>
<div style="left:667px;top:673px;width:988px;height:1px;background:#2a2a2a;"></div>
<div style="left:667px;top:692px;width:988px;height:1px;background:#2a2a2a;"></div>
<div style="left:667px;top:711px;width:988px;height:1px;background:#2a2a2a;"></div>
<div style="left:667px;top:730px;width:988px;height:1px;background:#2a2a2a;"></div>
<div style="left:667px;top:749px;width:988px;height:1px;background:#2a2a2a;"></div>
<div style="left:667px;top:768px;width:988px;height:1px;background:#2a2a2a;"></div>
<div style="left:667px;top:787px;width:988px;height:1px;background:#2a2a2a;"></div>
<div style="left:665px;top:485px;width:1px;height:302px;background:#3c3c3c;"></div>
<div style="left:672px;top:485px;width:1px;height:302px;background:#232323;"></div>
<div style="left:679px;top:485px;width:1px;height:302px;background:#232323;"></div>
<div style="left:686px;top:485px;width:1px;height:302px;background:#232323;"></div>
<div style="left:693px;top:485px;width:1px;height:302px;background:#3a3a3a;"></div>
<div style="left:693px;top:471px;width:1px;height:13px;background:#3c3c3c;"></div>
<span class="m" style="left:697.20px;top:472.78px;font-size:9.59px;color:#bdbdbd;">1.2</span>
<div style="left:700px;top:485px;width:1px;height:302px;background:#232323;"></div>
<div style="left:706px;top:485px;width:1px;height:302px;background:#232323;"></div>
<div style="left:713px;top:485px;width:1px;height:302px;background:#232323;"></div>
<div style="left:720px;top:485px;width:1px;height:302px;background:#3a3a3a;"></div>
<div style="left:720px;top:471px;width:1px;height:13px;background:#3c3c3c;"></div>
<span class="m" style="left:724.20px;top:472.78px;font-size:9.59px;color:#bdbdbd;">1.3</span>
<div style="left:727px;top:485px;width:1px;height:302px;background:#232323;"></div>
<div style="left:734px;top:485px;width:1px;height:302px;background:#232323;"></div>
<div style="left:741px;top:485px;width:1px;height:302px;background:#232323;"></div>
<div style="left:747px;top:485px;width:1px;height:302px;background:#3a3a3a;"></div>
<div style="left:747px;top:471px;width:1px;height:13px;background:#3c3c3c;"></div>
<span class="m" style="left:751.20px;top:472.78px;font-size:9.59px;color:#bdbdbd;">1.4</span>
<div style="left:754px;top:485px;width:1px;height:302px;background:#232323;"></div>
<div style="left:761px;top:485px;width:1px;height:302px;background:#232323;"></div>
<div style="left:768px;top:485px;width:1px;height:302px;background:#232323;"></div>
<div style="left:774px;top:485px;width:1px;height:302px;background:#3c3c3c;"></div>
<div style="left:775px;top:485px;width:1px;height:302px;background:#7e7e7e;"></div>
<div style="left:775px;top:471px;width:1px;height:13px;background:#5a5a5a;"></div>
<span class="m" style="left:779.20px;top:472.78px;font-size:9.59px;color:#bdbdbd;">2</span>
<div style="left:781px;top:485px;width:1px;height:302px;background:#232323;"></div>
<div style="left:788px;top:485px;width:1px;height:302px;background:#232323;"></div>
<div style="left:795px;top:485px;width:1px;height:302px;background:#232323;"></div>
<div style="left:802px;top:485px;width:1px;height:302px;background:#3a3a3a;"></div>
<div style="left:802px;top:471px;width:1px;height:13px;background:#3c3c3c;"></div>
<span class="m" style="left:806.20px;top:472.78px;font-size:9.59px;color:#bdbdbd;">2.2</span>
<div style="left:809px;top:485px;width:1px;height:302px;background:#232323;"></div>
<div style="left:816px;top:485px;width:1px;height:302px;background:#232323;"></div>
<div style="left:822px;top:485px;width:1px;height:302px;background:#232323;"></div>
<div style="left:829px;top:485px;width:1px;height:302px;background:#3a3a3a;"></div>
<div style="left:829px;top:471px;width:1px;height:13px;background:#3c3c3c;"></div>
<span class="m" style="left:833.20px;top:472.78px;font-size:9.59px;color:#bdbdbd;">2.3</span>
<div style="left:836px;top:485px;width:1px;height:302px;background:#232323;"></div>
<div style="left:843px;top:485px;width:1px;height:302px;background:#232323;"></div>
<div style="left:850px;top:485px;width:1px;height:302px;background:#232323;"></div>
<div style="left:856px;top:485px;width:1px;height:302px;background:#3a3a3a;"></div>
<div style="left:856px;top:471px;width:1px;height:13px;background:#3c3c3c;"></div>
<span class="m" style="left:860.20px;top:472.78px;font-size:9.59px;color:#bdbdbd;">2.4</span>
<div style="left:863px;top:485px;width:1px;height:302px;background:#232323;"></div>
<div style="left:870px;top:485px;width:1px;height:302px;background:#232323;"></div>
<div style="left:877px;top:485px;width:1px;height:302px;background:#232323;"></div>
<div style="left:883px;top:485px;width:1px;height:302px;background:#3c3c3c;"></div>
<div style="left:884px;top:485px;width:1px;height:302px;background:#7e7e7e;"></div>
<div style="left:884px;top:471px;width:1px;height:13px;background:#5a5a5a;"></div>
<span class="m" style="left:888.20px;top:472.78px;font-size:9.59px;color:#bdbdbd;">3</span>
<div style="left:891px;top:485px;width:1px;height:302px;background:#232323;"></div>
<div style="left:897px;top:485px;width:1px;height:302px;background:#232323;"></div>
<div style="left:904px;top:485px;width:1px;height:302px;background:#232323;"></div>
<div style="left:911px;top:485px;width:1px;height:302px;background:#3a3a3a;"></div>
<div style="left:911px;top:471px;width:1px;height:13px;background:#3c3c3c;"></div>
<span class="m" style="left:915.20px;top:472.78px;font-size:9.59px;color:#bdbdbd;">3.2</span>
<div style="left:918px;top:485px;width:1px;height:302px;background:#232323;"></div>
<div style="left:925px;top:485px;width:1px;height:302px;background:#232323;"></div>
<div style="left:931px;top:485px;width:1px;height:302px;background:#232323;"></div>
<div style="left:938px;top:485px;width:1px;height:302px;background:#3a3a3a;"></div>
<div style="left:938px;top:471px;width:1px;height:13px;background:#3c3c3c;"></div>
<span class="m" style="left:942.20px;top:472.78px;font-size:9.59px;color:#bdbdbd;">3.3</span>
<div style="left:945px;top:485px;width:1px;height:302px;background:#232323;"></div>
<div style="left:952px;top:485px;width:1px;height:302px;background:#232323;"></div>
<div style="left:959px;top:485px;width:1px;height:302px;background:#232323;"></div>
<div style="left:966px;top:485px;width:1px;height:302px;background:#3a3a3a;"></div>
<div style="left:966px;top:471px;width:1px;height:13px;background:#3c3c3c;"></div>
<span class="m" style="left:970.20px;top:472.78px;font-size:9.59px;color:#bdbdbd;">3.4</span>
<div style="left:972px;top:485px;width:1px;height:302px;background:#232323;"></div>
<div style="left:979px;top:485px;width:1px;height:302px;background:#232323;"></div>
<div style="left:986px;top:485px;width:1px;height:302px;background:#232323;"></div>
<div style="left:992px;top:485px;width:1px;height:302px;background:#3c3c3c;"></div>
<div style="left:993px;top:485px;width:1px;height:302px;background:#7e7e7e;"></div>
<div style="left:993px;top:471px;width:1px;height:13px;background:#5a5a5a;"></div>
<span class="m" style="left:997.20px;top:472.78px;font-size:9.59px;color:#bdbdbd;">4</span>
<div style="left:1000px;top:485px;width:1px;height:302px;background:#232323;"></div>
<div style="left:1006px;top:485px;width:1px;height:302px;background:#232323;"></div>
<div style="left:1013px;top:485px;width:1px;height:302px;background:#232323;"></div>
<div style="left:1020px;top:485px;width:1px;height:302px;background:#3a3a3a;"></div>
<div style="left:1020px;top:471px;width:1px;height:13px;background:#3c3c3c;"></div>
<span class="m" style="left:1024.20px;top:472.78px;font-size:9.59px;color:#bdbdbd;">4.2</span>
<div style="left:1027px;top:485px;width:1px;height:302px;background:#232323;"></div>
<div style="left:1034px;top:485px;width:1px;height:302px;background:#232323;"></div>
<div style="left:1041px;top:485px;width:1px;height:302px;background:#232323;"></div>
<div style="left:1047px;top:485px;width:1px;height:302px;background:#3a3a3a;"></div>
<div style="left:1047px;top:471px;width:1px;height:13px;background:#3c3c3c;"></div>
<span class="m" style="left:1051.20px;top:472.78px;font-size:9.59px;color:#bdbdbd;">4.3</span>
<div style="left:1054px;top:485px;width:1px;height:302px;background:#232323;"></div>
<div style="left:1061px;top:485px;width:1px;height:302px;background:#232323;"></div>
<div style="left:1068px;top:485px;width:1px;height:302px;background:#232323;"></div>
<div style="left:1075px;top:485px;width:1px;height:302px;background:#3a3a3a;"></div>
<div style="left:1075px;top:471px;width:1px;height:13px;background:#3c3c3c;"></div>
<span class="m" style="left:1079.20px;top:472.78px;font-size:9.59px;color:#bdbdbd;">4.4</span>
<div style="left:1081px;top:485px;width:1px;height:302px;background:#232323;"></div>
<div style="left:1088px;top:485px;width:1px;height:302px;background:#232323;"></div>
<div style="left:1095px;top:485px;width:1px;height:302px;background:#232323;"></div>
<div style="left:1101px;top:485px;width:1px;height:302px;background:#3c3c3c;"></div>
<div style="left:1102px;top:485px;width:1px;height:302px;background:#7e7e7e;"></div>
<div style="left:1102px;top:471px;width:1px;height:13px;background:#5a5a5a;"></div>
<span class="m" style="left:1106.20px;top:472.78px;font-size:9.59px;color:#bdbdbd;">5</span>
<div style="left:1109px;top:485px;width:1px;height:302px;background:#232323;"></div>
<div style="left:1116px;top:485px;width:1px;height:302px;background:#232323;"></div>
<div style="left:1122px;top:485px;width:1px;height:302px;background:#232323;"></div>
<div style="left:1129px;top:485px;width:1px;height:302px;background:#3a3a3a;"></div>
<div style="left:1129px;top:471px;width:1px;height:13px;background:#3c3c3c;"></div>
<span class="m" style="left:1133.20px;top:472.78px;font-size:9.59px;color:#bdbdbd;">5.2</span>
<div style="left:1136px;top:485px;width:1px;height:302px;background:#232323;"></div>
<div style="left:1143px;top:485px;width:1px;height:302px;background:#232323;"></div>
<div style="left:1150px;top:485px;width:1px;height:302px;background:#232323;"></div>
<div style="left:1156px;top:485px;width:1px;height:302px;background:#3a3a3a;"></div>
<div style="left:1156px;top:471px;width:1px;height:13px;background:#3c3c3c;"></div>
<span class="m" style="left:1160.20px;top:472.78px;font-size:9.59px;color:#bdbdbd;">5.3</span>
<div style="left:1163px;top:485px;width:1px;height:302px;background:#232323;"></div>
<div style="left:1170px;top:485px;width:1px;height:302px;background:#232323;"></div>
<div style="left:1177px;top:485px;width:1px;height:302px;background:#232323;"></div>
<div style="left:1184px;top:485px;width:1px;height:302px;background:#3a3a3a;"></div>
<div style="left:1184px;top:471px;width:1px;height:13px;background:#3c3c3c;"></div>
<span class="m" style="left:1188.20px;top:472.78px;font-size:9.59px;color:#bdbdbd;">5.4</span>
<div style="left:1191px;top:485px;width:1px;height:302px;background:#232323;"></div>
<div style="left:1197px;top:485px;width:1px;height:302px;background:#232323;"></div>
<div style="left:1204px;top:485px;width:1px;height:302px;background:#232323;"></div>
<div style="left:1210px;top:485px;width:1px;height:302px;background:#3c3c3c;"></div>
<div style="left:1211px;top:485px;width:1px;height:302px;background:#7e7e7e;"></div>
<div style="left:1211px;top:471px;width:1px;height:13px;background:#5a5a5a;"></div>
<span class="m" style="left:1215.20px;top:472.78px;font-size:9.59px;color:#bdbdbd;">6</span>
<div style="left:1218px;top:485px;width:1px;height:302px;background:#232323;"></div>
<div style="left:1225px;top:485px;width:1px;height:302px;background:#232323;"></div>
<div style="left:1231px;top:485px;width:1px;height:302px;background:#232323;"></div>
<div style="left:1238px;top:485px;width:1px;height:302px;background:#3a3a3a;"></div>
<div style="left:1238px;top:471px;width:1px;height:13px;background:#3c3c3c;"></div>
<span class="m" style="left:1242.20px;top:472.78px;font-size:9.59px;color:#bdbdbd;">6.2</span>
<div style="left:1245px;top:485px;width:1px;height:302px;background:#232323;"></div>
<div style="left:1252px;top:485px;width:1px;height:302px;background:#232323;"></div>
<div style="left:1259px;top:485px;width:1px;height:302px;background:#232323;"></div>
<div style="left:1266px;top:485px;width:1px;height:302px;background:#3a3a3a;"></div>
<div style="left:1266px;top:471px;width:1px;height:13px;background:#3c3c3c;"></div>
<span class="m" style="left:1270.20px;top:472.78px;font-size:9.59px;color:#bdbdbd;">6.3</span>
<div style="left:1272px;top:485px;width:1px;height:302px;background:#232323;"></div>
<div style="left:1279px;top:485px;width:1px;height:302px;background:#232323;"></div>
<div style="left:1286px;top:485px;width:1px;height:302px;background:#232323;"></div>
<div style="left:1293px;top:485px;width:1px;height:302px;background:#3a3a3a;"></div>
<div style="left:1293px;top:471px;width:1px;height:13px;background:#3c3c3c;"></div>
<span class="m" style="left:1297.20px;top:472.78px;font-size:9.59px;color:#bdbdbd;">6.4</span>
<div style="left:1300px;top:485px;width:1px;height:302px;background:#232323;"></div>
<div style="left:1306px;top:485px;width:1px;height:302px;background:#232323;"></div>
<div style="left:1313px;top:485px;width:1px;height:302px;background:#232323;"></div>
<div style="left:1319px;top:485px;width:1px;height:302px;background:#3c3c3c;"></div>
<div style="left:1320px;top:485px;width:1px;height:302px;background:#7e7e7e;"></div>
<div style="left:1320px;top:471px;width:1px;height:13px;background:#5a5a5a;"></div>
<span class="m" style="left:1324.20px;top:472.78px;font-size:9.59px;color:#bdbdbd;">7</span>
<div style="left:1327px;top:485px;width:1px;height:302px;background:#232323;"></div>
<div style="left:1334px;top:485px;width:1px;height:302px;background:#232323;"></div>
<div style="left:1341px;top:485px;width:1px;height:302px;background:#232323;"></div>
<div style="left:1347px;top:485px;width:1px;height:302px;background:#3a3a3a;"></div>
<div style="left:1347px;top:471px;width:1px;height:13px;background:#3c3c3c;"></div>
<span class="m" style="left:1351.20px;top:472.78px;font-size:9.59px;color:#bdbdbd;">7.2</span>
<div style="left:1354px;top:485px;width:1px;height:302px;background:#232323;"></div>
<div style="left:1361px;top:485px;width:1px;height:302px;background:#232323;"></div>
<div style="left:1368px;top:485px;width:1px;height:302px;background:#232323;"></div>
<div style="left:1375px;top:485px;width:1px;height:302px;background:#3a3a3a;"></div>
<div style="left:1375px;top:471px;width:1px;height:13px;background:#3c3c3c;"></div>
<span class="m" style="left:1379.20px;top:472.78px;font-size:9.59px;color:#bdbdbd;">7.3</span>
<div style="left:1381px;top:485px;width:1px;height:302px;background:#232323;"></div>
<div style="left:1388px;top:485px;width:1px;height:302px;background:#232323;"></div>
<div style="left:1395px;top:485px;width:1px;height:302px;background:#232323;"></div>
<div style="left:1402px;top:485px;width:1px;height:302px;background:#3a3a3a;"></div>
<div style="left:1402px;top:471px;width:1px;height:13px;background:#3c3c3c;"></div>
<span class="m" style="left:1406.20px;top:472.78px;font-size:9.59px;color:#bdbdbd;">7.4</span>
<div style="left:1409px;top:485px;width:1px;height:302px;background:#232323;"></div>
<div style="left:1416px;top:485px;width:1px;height:302px;background:#232323;"></div>
<div style="left:1422px;top:485px;width:1px;height:302px;background:#232323;"></div>
<div style="left:1428px;top:485px;width:1px;height:302px;background:#3c3c3c;"></div>
<div style="left:1429px;top:485px;width:1px;height:302px;background:#7e7e7e;"></div>
<div style="left:1429px;top:471px;width:1px;height:13px;background:#5a5a5a;"></div>
<span class="m" style="left:1433.20px;top:472.78px;font-size:9.59px;color:#bdbdbd;">8</span>
<div style="left:1436px;top:485px;width:1px;height:302px;background:#232323;"></div>
<div style="left:1443px;top:485px;width:1px;height:302px;background:#232323;"></div>
<div style="left:1450px;top:485px;width:1px;height:302px;background:#232323;"></div>
<div style="left:1456px;top:485px;width:1px;height:302px;background:#3a3a3a;"></div>
<div style="left:1456px;top:471px;width:1px;height:13px;background:#3c3c3c;"></div>
<span class="m" style="left:1460.20px;top:472.78px;font-size:9.59px;color:#bdbdbd;">8.2</span>
<div style="left:1463px;top:485px;width:1px;height:302px;background:#232323;"></div>
<div style="left:1470px;top:485px;width:1px;height:302px;background:#232323;"></div>
<div style="left:1477px;top:485px;width:1px;height:302px;background:#232323;"></div>
<div style="left:1484px;top:485px;width:1px;height:302px;background:#3a3a3a;"></div>
<div style="left:1484px;top:471px;width:1px;height:13px;background:#3c3c3c;"></div>
<span class="m" style="left:1488.20px;top:472.78px;font-size:9.59px;color:#bdbdbd;">8.3</span>
<div style="left:1491px;top:485px;width:1px;height:302px;background:#232323;"></div>
<div style="left:1497px;top:485px;width:1px;height:302px;background:#232323;"></div>
<div style="left:1504px;top:485px;width:1px;height:302px;background:#232323;"></div>
<div style="left:1511px;top:485px;width:1px;height:302px;background:#3a3a3a;"></div>
<div style="left:1511px;top:471px;width:1px;height:13px;background:#3c3c3c;"></div>
<span class="m" style="left:1515.20px;top:472.78px;font-size:9.59px;color:#bdbdbd;">8.4</span>
<div style="left:1518px;top:485px;width:1px;height:302px;background:#232323;"></div>
<div style="left:1525px;top:485px;width:1px;height:302px;background:#232323;"></div>
<div style="left:1531px;top:485px;width:1px;height:302px;background:#232323;"></div>
<div style="left:1537px;top:485px;width:1px;height:302px;background:#3c3c3c;"></div>
<div style="left:1538px;top:485px;width:1px;height:302px;background:#7e7e7e;"></div>
<div style="left:1538px;top:471px;width:1px;height:13px;background:#5a5a5a;"></div>
<span class="m" style="left:1542.20px;top:472.78px;font-size:9.59px;color:#777777;">9</span>
<div style="left:1545px;top:485px;width:1px;height:302px;background:#1d1d1d;"></div>
<div style="left:1552px;top:485px;width:1px;height:302px;background:#1d1d1d;"></div>
<div style="left:1559px;top:485px;width:1px;height:302px;background:#1d1d1d;"></div>
<div style="left:1566px;top:485px;width:1px;height:302px;background:#2c2c2c;"></div>
<div style="left:1566px;top:471px;width:1px;height:13px;background:#3c3c3c;"></div>
<span class="m" style="left:1570.20px;top:472.78px;font-size:9.59px;color:#777777;">9.2</span>
<div style="left:1572px;top:485px;width:1px;height:302px;background:#1d1d1d;"></div>
<div style="left:1579px;top:485px;width:1px;height:302px;background:#1d1d1d;"></div>
<div style="left:1586px;top:485px;width:1px;height:302px;background:#1d1d1d;"></div>
<div style="left:1593px;top:485px;width:1px;height:302px;background:#2c2c2c;"></div>
<div style="left:1593px;top:471px;width:1px;height:13px;background:#3c3c3c;"></div>
<span class="m" style="left:1597.20px;top:472.78px;font-size:9.59px;color:#777777;">9.3</span>
<div style="left:1600px;top:485px;width:1px;height:302px;background:#1d1d1d;"></div>
<div style="left:1606px;top:485px;width:1px;height:302px;background:#1d1d1d;"></div>
<div style="left:1613px;top:485px;width:1px;height:302px;background:#1d1d1d;"></div>
<div style="left:1620px;top:485px;width:1px;height:302px;background:#2c2c2c;"></div>
<div style="left:1620px;top:471px;width:1px;height:13px;background:#3c3c3c;"></div>
<span class="m" style="left:1624.20px;top:472.78px;font-size:9.59px;color:#777777;">9.4</span>
<div style="left:1627px;top:485px;width:1px;height:302px;background:#1d1d1d;"></div>
<div style="left:1634px;top:485px;width:1px;height:302px;background:#1d1d1d;"></div>
<div style="left:1641px;top:485px;width:1px;height:302px;background:#1d1d1d;"></div>
<div style="left:1646px;top:485px;width:1px;height:302px;background:#3c3c3c;"></div>
<div style="left:1647px;top:485px;width:1px;height:302px;background:#7e7e7e;"></div>
<div style="left:1647px;top:471px;width:1px;height:13px;background:#5a5a5a;"></div>
<span class="m" style="left:1651.20px;top:472.78px;font-size:9.59px;color:#777777;">10</span>
<span class="m" style="left:671.00px;top:472.78px;font-size:9.59px;color:#bdbdbd;">1</span>
<div style="left:665px;top:471px;width:2px;height:490px;background:#a0a0a0;"></div>
<svg style="left:665px;top:470px;" width="9" height="15" viewBox="0 0 9 15"><path d="M0.5 0.5 L1.5 0.5 L8 7 L1.5 13.5 L0.5 13.5 Z" fill="#f4f4f4"/></svg>
<div style="left:1538px;top:471px;width:1px;height:490px;background:#f4f4f4;"></div>
<div style="left:1537px;top:471px;width:1px;height:490px;background:#505050;"></div>
<svg style="left:1531px;top:470px;" width="8" height="15" viewBox="0 0 8 15"><path d="M7.5 0.5 L7.5 13.5 L1 7 Z" fill="#f4f4f4"/></svg>
<div style="left:1655px;top:485px;width:13px;height:476px;background:#1b1b1b;"></div>
<div style="left:1654px;top:485px;width:1px;height:476px;background:#131313;"></div>
<div style="left:1659px;top:489px;width:5px;height:467px;background:#333333;border-radius:2px;"></div>
<span class="m" style="left:671.50px;top:449.56px;font-size:10.32px;color:#f26b2a;transform:scaleX(0.8444);transform-origin:0 0;">INTRO</span>
<span class="m" style="left:1471.70px;top:448.38px;font-size:9.59px;color:#6e6e6e;transform:scaleX(0.9726);transform-origin:0 0;">Start:</span>
<span style="left:1500.50px;top:448.38px;font-size:9.59px;color:#f0f0f0;font-weight:bold;transform:scaleX(0.8929);transform-origin:0 0;">1:1:1</span>
<span class="m" style="left:1537.80px;top:448.38px;font-size:9.59px;color:#6e6e6e;">Length:</span>
<span style="left:1576.10px;top:448.38px;font-size:9.59px;color:#f0f0f0;font-weight:bold;transform:scaleX(0.9330);transform-origin:0 0;">8:0:0</span>
<svg style="left:1616px;top:447px;" width="16" height="16" viewBox="0 0 16 16"><g fill="#cfcfcf"><rect x="0.5" y="1.2" width="3.5" height="1.3"/><rect x="8.5" y="1.2" width="5" height="1.3"/><rect x="5" y="3.8" width="4.5" height="1.3"/><rect x="0.5" y="6.2" width="13" height="1.4"/></g><rect x="8.6" y="9.8" width="4.4" height="4.4" fill="none" stroke="#cfcfcf" stroke-width="0.9" stroke-dasharray="1.6 1.1"/></svg>
<svg style="left:1642px;top:446px;" width="16" height="17" viewBox="0 0 16 17"><g fill="#cfcfcf"><rect x="0.6" y="0.6" width="1.4" height="10"/><rect x="3.6" y="3.4" width="1.4" height="4.5"/><rect x="6.6" y="1.6" width="1.4" height="8"/><rect x="9.6" y="3" width="1.4" height="5"/></g><rect x="7.4" y="10.8" width="4.4" height="4.4" fill="none" stroke="#cfcfcf" stroke-width="0.9" stroke-dasharray="1.6 1.1"/></svg>
<div style="left:536px;top:961px;width:1132px;height:1px;background:#0e0e0e;"></div>
<div style="left:536px;top:962px;width:1132px;height:19px;background:#1b1b1b;"></div>
<div style="left:665px;top:962px;width:1px;height:19px;background:#111;"></div>
<svg style="left:542px;top:965px;" width="12" height="12" viewBox="0 0 12 12"><g stroke="#ddd" stroke-width="1.3"><path d="M3.5 0.5 L2.5 11 M8.5 0.5 L7.5 11 M0.5 3.8 L11 3.8 M0 7.8 L10.5 7.8"/></g></svg>
<span style="left:558.50px;top:966.39px;font-size:10.17px;color:#e8e8e8;font-weight:bold;transform:scaleX(0.9904);transform-origin:0 0;">1/16</span>
<svg style="left:646px;top:964px;" width="12" height="12" viewBox="0 0 12 12"><path d="M2 10 L9.5 2.5" stroke="#aaa" stroke-width="2.4"/><path d="M1 11 L2.2 9.8" stroke="#aaa" stroke-width="1"/></svg>
<div style="left:669px;top:968px;width:738px;height:5px;background:#333333;border-radius:2.5px;"></div>
<div style="left:1157.0px;top:505.4px;width:6.5px;height:14px;background:#f0cc00;box-sizing:border-box;border:1px solid #121212;border-radius:1.5px;"></div>
<div style="left:1293.0px;top:505.4px;width:7.3px;height:14px;background:#f0cc00;box-sizing:border-box;border:1px solid #121212;border-radius:1.5px;"></div>
<div style="left:1374.8px;top:505.4px;width:7.4px;height:14px;background:#f0cc00;box-sizing:border-box;border:1px solid #121212;border-radius:1.5px;"></div>
<div style="left:1518.0px;top:505.4px;width:2.8px;height:14px;background:#c7a200;box-sizing:border-box;border:1px solid #121212;border-radius:1.5px;"></div>
<div style="left:1521.5px;top:505.4px;width:11.5px;height:14px;background:#b39000;box-sizing:border-box;border:1px solid #121212;border-radius:1.5px;"></div>
<div style="left:1524.2px;top:506.4px;width:0.9px;height:12px;background:#3a2e00;"></div>
<div style="left:1526.8px;top:506.4px;width:0.9px;height:12px;background:#3a2e00;"></div>
<div style="left:1529.4px;top:506.4px;width:0.9px;height:12px;background:#3a2e00;"></div>
<div style="left:698.9px;top:524.5px;width:3.4px;height:14px;background:#0aa2b2;box-sizing:border-box;border:1px solid #0c0c0c;border-radius:1px;"></div>
<div style="left:705.4px;top:524.5px;width:3.4px;height:14px;background:#0aa2b2;box-sizing:border-box;border:1px solid #0c0c0c;border-radius:1px;"></div>
<div style="left:807.9px;top:524.5px;width:3.4px;height:14px;background:#0aa2b2;box-sizing:border-box;border:1px solid #0c0c0c;border-radius:1px;"></div>
<div style="left:917.2px;top:524.5px;width:3.4px;height:14px;background:#0aa2b2;box-sizing:border-box;border:1px solid #0c0c0c;border-radius:1px;"></div>
<div style="left:923.7px;top:524.5px;width:3.4px;height:14px;background:#0aa2b2;box-sizing:border-box;border:1px solid #0c0c0c;border-radius:1px;"></div>
<div style="left:1026.0px;top:524.5px;width:3.4px;height:14px;background:#0aa2b2;box-sizing:border-box;border:1px solid #0c0c0c;border-radius:1px;"></div>
<div style="left:1033.4px;top:524.5px;width:3.4px;height:14px;background:#0aa2b2;box-sizing:border-box;border:1px solid #0c0c0c;border-radius:1px;"></div>
<div style="left:1135.7px;top:524.5px;width:3.4px;height:14px;background:#0aa2b2;box-sizing:border-box;border:1px solid #0c0c0c;border-radius:1px;"></div>
<div style="left:1142.1px;top:524.5px;width:3.4px;height:14px;background:#0aa2b2;box-sizing:border-box;border:1px solid #0c0c0c;border-radius:1px;"></div>
<div style="left:1190.2px;top:524.5px;width:3.4px;height:14px;background:#0aa2b2;box-sizing:border-box;border:1px solid #0c0c0c;border-radius:1px;"></div>
<div style="left:1197.5px;top:524.5px;width:3.4px;height:14px;background:#0aa2b2;box-sizing:border-box;border:1px solid #0c0c0c;border-radius:1px;"></div>
<div style="left:1244.8px;top:524.5px;width:3.4px;height:14px;background:#0aa2b2;box-sizing:border-box;border:1px solid #0c0c0c;border-radius:1px;"></div>
<div style="left:1299.0px;top:524.5px;width:3.4px;height:14px;background:#0aa2b2;box-sizing:border-box;border:1px solid #0c0c0c;border-radius:1px;"></div>
<div style="left:1306.2px;top:524.5px;width:3.4px;height:14px;background:#0aa2b2;box-sizing:border-box;border:1px solid #0c0c0c;border-radius:1px;"></div>
<div style="left:1354.3px;top:524.5px;width:3.4px;height:14px;background:#0aa2b2;box-sizing:border-box;border:1px solid #0c0c0c;border-radius:1px;"></div>
<div style="left:1360.9px;top:524.5px;width:3.4px;height:14px;background:#0aa2b2;box-sizing:border-box;border:1px solid #0c0c0c;border-radius:1px;"></div>
<div style="left:1408.8px;top:524.5px;width:3.4px;height:14px;background:#0aa2b2;box-sizing:border-box;border:1px solid #0c0c0c;border-radius:1px;"></div>
<div style="left:1415.0px;top:524.5px;width:3.4px;height:14px;background:#0aa2b2;box-sizing:border-box;border:1px solid #0c0c0c;border-radius:1px;"></div>
<div style="left:1421.9px;top:524.5px;width:3.4px;height:14px;background:#0aa2b2;box-sizing:border-box;border:1px solid #0c0c0c;border-radius:1px;"></div>
<div style="left:691.7px;top:581.2px;width:3.4px;height:14px;background:#0aa2b2;box-sizing:border-box;border:1px solid #0c0c0c;border-radius:1px;"></div>
<div style="left:698.9px;top:581.2px;width:3.4px;height:14px;background:#0aa2b2;box-sizing:border-box;border:1px solid #0c0c0c;border-radius:1px;"></div>
<div style="left:801.7px;top:581.2px;width:3.4px;height:14px;background:#0aa2b2;box-sizing:border-box;border:1px solid #0c0c0c;border-radius:1px;"></div>
<div style="left:910.3px;top:581.2px;width:3.4px;height:14px;background:#0aa2b2;box-sizing:border-box;border:1px solid #0c0c0c;border-radius:1px;"></div>
<div style="left:1128.7px;top:581.2px;width:3.4px;height:14px;background:#0aa2b2;box-sizing:border-box;border:1px solid #0c0c0c;border-radius:1px;"></div>
<div style="left:1135.7px;top:581.2px;width:3.4px;height:14px;background:#0aa2b2;box-sizing:border-box;border:1px solid #0c0c0c;border-radius:1px;"></div>
<div style="left:1183.1px;top:581.2px;width:3.4px;height:14px;background:#0aa2b2;box-sizing:border-box;border:1px solid #0c0c0c;border-radius:1px;"></div>
<div style="left:1237.7px;top:581.2px;width:3.4px;height:14px;background:#0aa2b2;box-sizing:border-box;border:1px solid #0c0c0c;border-radius:1px;"></div>
<div style="left:1285.7px;top:581.2px;width:3.4px;height:14px;background:#0aa2b2;box-sizing:border-box;border:1px solid #0c0c0c;border-radius:1px;"></div>
<div style="left:1292.9px;top:581.2px;width:3.4px;height:14px;background:#0aa2b2;box-sizing:border-box;border:1px solid #0c0c0c;border-radius:1px;"></div>
<div style="left:1347.3px;top:581.2px;width:3.4px;height:14px;background:#0aa2b2;box-sizing:border-box;border:1px solid #0c0c0c;border-radius:1px;"></div>
<div style="left:1401.7px;top:581.2px;width:3.4px;height:14px;background:#0aa2b2;box-sizing:border-box;border:1px solid #0c0c0c;border-radius:1px;"></div>
<div style="left:1408.6px;top:581.2px;width:3.4px;height:14px;background:#0aa2b2;box-sizing:border-box;border:1px solid #0c0c0c;border-radius:1px;"></div>
<div style="left:1388.2px;top:581.2px;width:3.4px;height:14px;background:#0a7f8c;box-sizing:border-box;border:1px solid #0c0c0c;border-radius:1px;"></div>
<div style="left:665.3px;top:543.3px;width:2.7px;height:14px;background:#f26a2c;box-sizing:border-box;border:1px solid #121212;border-radius:1.5px;"></div>
<div style="left:720.0px;top:543.3px;width:3.6px;height:14px;background:#f26a2c;box-sizing:border-box;border:1px solid #121212;border-radius:1.5px;"></div>
<div style="left:740.0px;top:543.3px;width:5.2px;height:14px;background:#f26a2c;box-sizing:border-box;border:1px solid #121212;border-radius:1.5px;"></div>
<div style="left:761.0px;top:543.3px;width:3.0px;height:14px;background:#f26a2c;box-sizing:border-box;border:1px solid #121212;border-radius:1.5px;"></div>
<div style="left:774.0px;top:543.3px;width:6.2px;height:14px;background:#f26a2c;box-sizing:border-box;border:1px solid #121212;border-radius:1.5px;"></div>
<div style="left:795.3px;top:543.3px;width:5.3px;height:14px;background:#f26a2c;box-sizing:border-box;border:1px solid #121212;border-radius:1.5px;"></div>
<div style="left:815.0px;top:543.3px;width:3.8px;height:14px;background:#f26a2c;box-sizing:border-box;border:1px solid #121212;border-radius:1.5px;"></div>
<div style="left:836.0px;top:543.3px;width:4.8px;height:14px;background:#f26a2c;box-sizing:border-box;border:1px solid #121212;border-radius:1.5px;"></div>
<div style="left:849.0px;top:543.3px;width:7.0px;height:14px;background:#f26a2c;box-sizing:border-box;border:1px solid #121212;border-radius:1.5px;"></div>
<div style="left:1047.4px;top:543.3px;width:7.4px;height:14px;background:#f26a2c;box-sizing:border-box;border:1px solid #121212;border-radius:1.5px;"></div>
<div style="left:1067.7px;top:543.3px;width:7.1px;height:14px;background:#f26a2c;box-sizing:border-box;border:1px solid #121212;border-radius:1.5px;"></div>
<div style="left:1088.0px;top:543.3px;width:5.0px;height:14px;background:#f26a2c;box-sizing:border-box;border:1px solid #121212;border-radius:1.5px;"></div>
<div style="left:1101.4px;top:543.3px;width:5.8px;height:14px;background:#f26a2c;box-sizing:border-box;border:1px solid #121212;border-radius:1.5px;"></div>
<div style="left:1157.0px;top:543.3px;width:5.0px;height:14px;background:#f26a2c;box-sizing:border-box;border:1px solid #121212;border-radius:1.5px;"></div>
<div style="left:1177.0px;top:543.3px;width:5.4px;height:14px;background:#f26a2c;box-sizing:border-box;border:1px solid #121212;border-radius:1.5px;"></div>
<div style="left:1197.8px;top:543.3px;width:3.2px;height:14px;background:#f26a2c;box-sizing:border-box;border:1px solid #121212;border-radius:1.5px;"></div>
<div style="left:1211.2px;top:543.3px;width:5.8px;height:14px;background:#f26a2c;box-sizing:border-box;border:1px solid #121212;border-radius:1.5px;"></div>
<div style="left:1231.5px;top:543.3px;width:6.3px;height:14px;background:#f26a2c;box-sizing:border-box;border:1px solid #121212;border-radius:1.5px;"></div>
<div style="left:1251.8px;top:543.3px;width:4.7px;height:14px;background:#f26a2c;box-sizing:border-box;border:1px solid #121212;border-radius:1.5px;"></div>
<div style="left:1272.3px;top:543.3px;width:5.7px;height:14px;background:#f26a2c;box-sizing:border-box;border:1px solid #121212;border-radius:1.5px;"></div>
<div style="left:1285.8px;top:543.3px;width:7.0px;height:14px;background:#f26a2c;box-sizing:border-box;border:1px solid #121212;border-radius:1.5px;"></div>
<div style="left:1305.8px;top:543.3px;width:5.9px;height:14px;background:#f26a2c;box-sizing:border-box;border:1px solid #121212;border-radius:1.5px;"></div>
<div style="left:1320.0px;top:543.3px;width:6.8px;height:14px;background:#f26a2c;box-sizing:border-box;border:1px solid #121212;border-radius:1.5px;"></div>
<div style="left:1375.4px;top:543.3px;width:4.1px;height:14px;background:#f26a2c;box-sizing:border-box;border:1px solid #121212;border-radius:1.5px;"></div>
<div style="left:1396.0px;top:543.3px;width:5.4px;height:14px;background:#f26a2c;box-sizing:border-box;border:1px solid #121212;border-radius:1.5px;"></div>
<div style="left:1415.5px;top:543.3px;width:5.1px;height:14px;background:#f26a2c;box-sizing:border-box;border:1px solid #121212;border-radius:1.5px;"></div>
<div style="left:828.0px;top:543.3px;width:4.0px;height:14px;background:#a5461e;box-sizing:border-box;border:1px solid #121212;border-radius:1.5px;"></div>
<div style="left:1265.2px;top:543.3px;width:3.1px;height:14px;background:#a5461e;box-sizing:border-box;border:1px solid #121212;border-radius:1.5px;"></div>
<div style="left:869.8px;top:543.3px;width:13.7px;height:14px;background:#f26a2c;box-sizing:border-box;border:1px solid #121212;border-radius:1.5px;"></div>
<div style="left:883.0px;top:543.3px;width:7.0px;height:14px;background:#f26a2c;box-sizing:border-box;border:1px solid #121212;border-radius:1.5px;"></div>
<div style="left:889.5px;top:543.3px;width:48.5px;height:14px;background:#f26a2c;box-sizing:border-box;border:1px solid #121212;border-radius:1.5px;"></div>
<div style="left:938.0px;top:543.3px;width:21.5px;height:14px;background:#f26a2c;box-sizing:border-box;border:1px solid #121212;border-radius:1.5px;"></div>
<div style="left:959.5px;top:543.3px;width:4.7px;height:14px;background:#f26a2c;box-sizing:border-box;border:1px solid #121212;border-radius:1.5px;"></div>
<div style="left:964.2px;top:543.3px;width:15.0px;height:14px;background:#f26a2c;box-sizing:border-box;border:1px solid #121212;border-radius:1.5px;"></div>
<div style="left:979.2px;top:543.3px;width:4.6px;height:14px;background:#f26a2c;box-sizing:border-box;border:1px solid #121212;border-radius:1.5px;"></div>
<div style="left:993.0px;top:543.3px;width:5.3px;height:14px;background:#f26a2c;box-sizing:border-box;border:1px solid #121212;border-radius:1.5px;"></div>
<div style="left:1006.6px;top:543.3px;width:4.2px;height:14px;background:#f26a2c;box-sizing:border-box;border:1px solid #121212;border-radius:1.5px;"></div>
<div style="left:1020.7px;top:543.3px;width:4.6px;height:14px;background:#f26a2c;box-sizing:border-box;border:1px solid #121212;border-radius:1.5px;"></div>
<div style="left:1034.2px;top:543.3px;width:4.2px;height:14px;background:#f26a2c;box-sizing:border-box;border:1px solid #121212;border-radius:1.5px;"></div>
<div style="left:938.3px;top:541.5px;width:7px;height:7px;box-sizing:border-box;border:1px solid #e8e8e8;border-radius:1px;"></div>
<div style="left:937px;top:547px;width:102px;height:262px;background:#3b3b3b;box-sizing:border-box;border:1px solid #2a2a2a;border-radius:2px;box-shadow:0 2px 6px rgba(0,0,0,0.5);"></div>
<div style="left:938px;top:633px;width:100px;height:19px;background:#575757;"></div>
<div style="left:938px;top:653px;width:100px;height:1px;background:#2c2c2c;"></div>
<div style="left:938px;top:697px;width:100px;height:1px;background:#2c2c2c;"></div>
<div style="left:938px;top:761px;width:100px;height:1px;background:#2c2c2c;"></div>
<div style="left:938px;top:784px;width:100px;height:1px;background:#2c2c2c;"></div>
<span class="m" style="left:954.80px;top:554.63px;font-size:9.88px;color:#f0f0f0;transform:scaleX(0.9281);transform-origin:0 0;">Select</span>
<span class="m" style="left:954.80px;top:575.23px;font-size:9.88px;color:#f0f0f0;transform:scaleX(0.9359);transform-origin:0 0;">Draw</span>
<span class="m" style="left:954.80px;top:595.83px;font-size:9.88px;color:#f0f0f0;transform:scaleX(0.9780);transform-origin:0 0;">Split</span>
<span class="m" style="left:954.80px;top:616.23px;font-size:9.88px;color:#f0f0f0;transform:scaleX(0.9704);transform-origin:0 0;">Join</span>
<span class="m" style="left:954.80px;top:636.73px;font-size:9.88px;color:#f0f0f0;transform:scaleX(0.9913);transform-origin:0 0;">Mute</span>
<span class="m" style="left:954.80px;top:659.63px;font-size:9.88px;color:#f0f0f0;transform:scaleX(0.9751);transform-origin:0 0;">Quantize</span>
<span class="m" style="left:954.80px;top:680.13px;font-size:9.88px;color:#f0f0f0;transform:scaleX(0.9409);transform-origin:0 0;">Quantize 50%</span>
<span class="m" style="left:954.80px;top:702.83px;font-size:9.88px;color:#f0f0f0;transform:scaleX(1.0085);transform-origin:0 0;">Cut</span>
<span class="m" style="left:954.80px;top:723.63px;font-size:9.88px;color:#f0f0f0;transform:scaleX(0.9576);transform-origin:0 0;">Copy</span>
<span class="m" style="left:954.80px;top:744.03px;font-size:9.88px;color:#6a6a6a;transform:scaleX(0.9662);transform-origin:0 0;">Paste</span>
<span class="m" style="left:954.80px;top:766.93px;font-size:9.88px;color:#f0f0f0;transform:scaleX(0.9452);transform-origin:0 0;">Delete</span>
<span class="m" style="left:954.80px;top:789.63px;font-size:9.88px;color:#f0f0f0;transform:scaleX(0.9495);transform-origin:0 0;">Nudge Grid</span>
<svg style="left:941px;top:553px;" width="10" height="13" viewBox="0 0 10 13"><path d="M1 0.8 L1 11 L3.6 8.6 L5.6 12.3 L7.2 11.5 L5.3 7.9 L8.6 7.6 Z" fill="#eee"/></svg>
<svg style="left:940px;top:574px;" width="11" height="11" viewBox="0 0 11 11"><path d="M1.2 9.8 L9.5 1.5" stroke="#bbb" stroke-width="1.6"/></svg>
<svg style="left:940px;top:594px;" width="12" height="12" viewBox="0 0 12 12"><g fill="none" stroke="#bbb" stroke-width="0.9"><path d="M1 2 L7.5 8.5"/><path d="M1 9 L7 3"/><circle cx="9" cy="9" r="1.8"/><circle cx="9" cy="3" r="0"/></g><path d="M5 6 L10.5 4" stroke="#bbb" stroke-width="0.9"/></svg>
<svg style="left:940px;top:615px;" width="11" height="11" viewBox="0 0 11 11"><path d="M5.5 0.5 L5.5 10.5 M0.5 5.5 L10.5 5.5" stroke="#999" stroke-width="1"/></svg>
<svg style="left:940px;top:636px;" width="11" height="11" viewBox="0 0 11 11"><path d="M1 1 L9.5 9.5 M9.5 1 L1 9.5" stroke="#ccc" stroke-width="1.1"/></svg>
<svg style="left:1025px;top:790px;" width="7" height="9" viewBox="0 0 7 9"><path d="M1.5 1 L5.5 4.5 L1.5 8 Z" fill="#ddd"/></svg>
</body></html>
